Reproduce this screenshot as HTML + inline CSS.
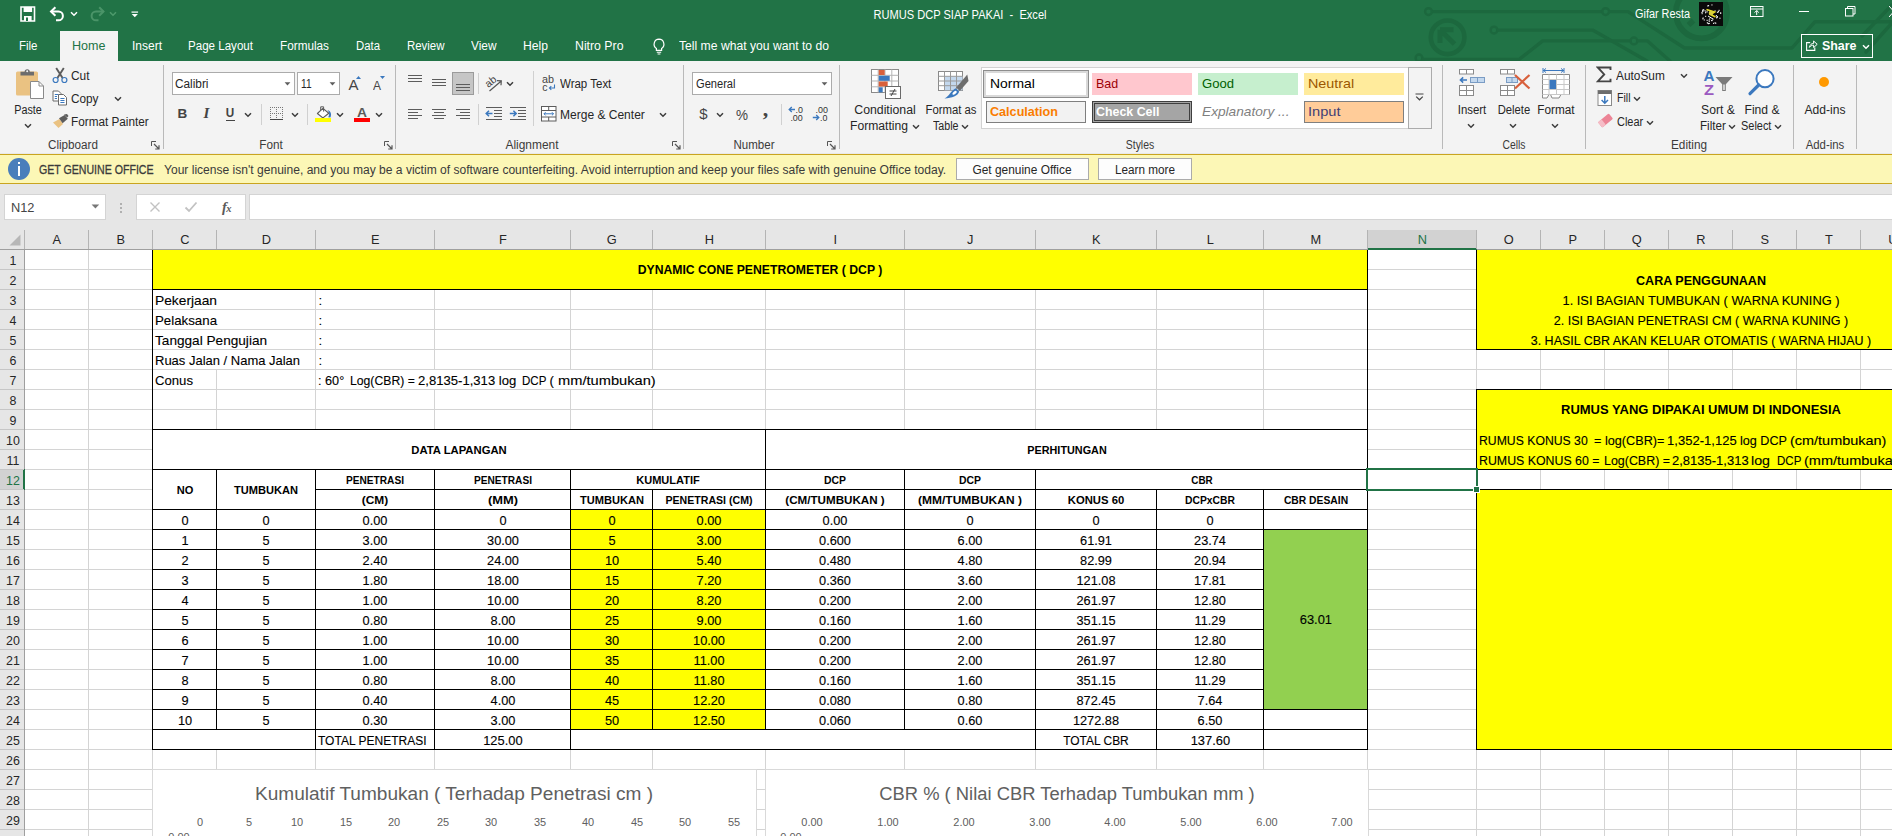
<!DOCTYPE html>
<html><head><meta charset="utf-8"><title>RUMUS DCP SIAP PAKAI - Excel</title>
<style>
html,body{margin:0;padding:0;}
body{width:1892px;height:836px;overflow:hidden;position:relative;background:#fff;font-family:"Liberation Sans",sans-serif;}
.a{position:absolute;display:block;}
.t{position:absolute;white-space:pre;display:block;}
</style></head><body>

<div class="a" style="left:0px;top:0px;width:1892px;height:61px;background:#217346;"></div>
<svg class="a" style="left:1400px;top:0px;" width="492" height="61" viewBox="0 0 492 61">
<g fill="none" stroke="#1c683e" stroke-width="3.400" stroke-linecap="round" stroke-linejoin="round">
<path d="M32.500 11.600 H201.500"/>
<circle cx="28.500" cy="11.600" r="3.400" stroke-width="2.400"/>
<circle cx="205.600" cy="11.600" r="3.400" stroke-width="2.400"/>
<path d="M209.600 11.600 H228 L284.500 48 H392 L415 21.700 H492"/>
<circle cx="47.600" cy="37.300" r="16.800" stroke-width="4.600"/>
<path d="M40 29.700 L54.500 44 M40 29.700 H53.500 M40 29.700 V43" stroke-width="5" stroke-linecap="butt" stroke-linejoin="miter"/>
<circle cx="94" cy="30.100" r="3.400" stroke-width="2.400"/>
<path d="M98 30.100 H192.600 L247 61"/>
<circle cx="19" cy="57.900" r="3.400" stroke-width="2.400"/>
<path d="M23 59.500 H119 L142.700 40.900 H230"/>
<circle cx="233.900" cy="40.900" r="3.400" stroke-width="2.400"/>
<path d="M237.800 40.900 H247.500 L270 61"/>
<circle cx="301.400" cy="12.800" r="25.600" stroke-width="5.800"/>
<path d="M288.500 25 L293.500 20.500" stroke-width="5.500" stroke-linecap="butt"/>
<path d="M492 5 L462 36 M492 23 L466 52"/>
</g></svg>
<svg class="a" style="left:20px;top:6px;" width="16" height="16" viewBox="0 0 16 16"><path d="M1 1 H14.5 V15 H1 Z" fill="none" stroke="#fff" stroke-width="1.6"/><rect x="3.6" y="1" width="8.5" height="5" fill="#fff"/><rect x="4" y="10" width="7.6" height="5" fill="#fff"/><rect x="6" y="11.5" width="2" height="3.5" fill="#217346"/></svg>
<svg class="a" style="left:49px;top:6px;" width="18" height="16" viewBox="0 0 18 16"><path d="M2 5.500 H9.500 A4.400 4.400 0 0 1 9.500 14.300 H7" fill="none" stroke="#fff" stroke-width="2"/><path d="M6.400 1.200 L2 5.500 L6.400 9.800" fill="none" stroke="#fff" stroke-width="2"/></svg>
<svg class="a" style="left:70px;top:11px;" width="8" height="6" viewBox="0 0 8 6"><path d="M1 1.2 L4 4.2 L7 1.2" fill="none" stroke="#fff" stroke-width="1.5"/></svg>
<svg class="a" style="left:88px;top:6px;" width="18" height="16" viewBox="0 0 18 16"><path d="M15.500 5.500 H8 A4.400 4.400 0 0 0 8 14.300 H10.500" fill="none" stroke="#4a9468" stroke-width="2"/><path d="M11.200 1.200 L15.500 5.500 L11.200 9.800" fill="none" stroke="#4a9468" stroke-width="2"/></svg>
<svg class="a" style="left:109px;top:11px;" width="8" height="6" viewBox="0 0 8 6"><path d="M1 1.2 L4 4.2 L7 1.2" fill="none" stroke="#4e9a6c" stroke-width="1.5"/></svg>
<svg class="a" style="left:131px;top:10.5px;" width="8" height="7" viewBox="0 0 8 7"><rect x="0.5" y="0.5" width="6.6" height="1.2" fill="#fff"/><path d="M0.7 3 H6.9 L3.8 6.2 Z" fill="#fff"/></svg>
<span class="t" style="left:959.5px;top:6.90px;font-size:12px;line-height:17px;color:#fff;transform:translateX(-50%) scaleX(0.9235);">RUMUS DCP SIAP PAKAI  -  Excel</span>
<span class="t" style="left:1634.5px;top:6.10px;font-size:12px;line-height:17px;color:#fff;transform-origin:0 50%;transform:scaleX(0.9065);">Gifar Resta</span>
<div class="a" style="left:1699px;top:2px;width:24px;height:24px;background:#0a0a0a;"></div>
<svg class="a" style="left:1699px;top:2px;" width="24" height="24" viewBox="0 0 24 24"><g fill="#f4f4f4"><rect x="7.8" y="20.2" width="1.1" height="1.1"/><rect x="4.7" y="17.4" width="1.1" height="1.1"/><rect x="17.6" y="14.5" width="1.1" height="1.1"/><rect x="17.1" y="15.3" width="1.1" height="1.1"/><rect x="17.8" y="14.0" width="1.1" height="1.1"/><rect x="14.0" y="20.8" width="1.1" height="1.1"/><rect x="3.6" y="15.5" width="1.1" height="1.1"/><rect x="12.4" y="18.0" width="1.1" height="1.1"/><rect x="3.3" y="16.3" width="1.1" height="1.1"/><rect x="3.4" y="8.0" width="1.1" height="1.1"/><rect x="7.8" y="7.3" width="1.1" height="1.1"/><rect x="17.9" y="9.8" width="1.1" height="1.1"/><rect x="4.1" y="7.1" width="1.1" height="1.1"/><rect x="21.1" y="10.4" width="1.1" height="1.1"/><rect x="3.2" y="8.5" width="1.1" height="1.1"/><rect x="9.7" y="20.9" width="1.1" height="1.1"/><rect x="6.0" y="10.2" width="1.1" height="1.1"/><rect x="8.5" y="20.9" width="1.1" height="1.1"/><rect x="8.2" y="3.4" width="1.1" height="1.1"/><rect x="7.6" y="9.3" width="1.1" height="1.1"/><rect x="15.5" y="20.3" width="1.1" height="1.1"/><rect x="3.2" y="9.1" width="1.1" height="1.1"/><rect x="6.3" y="9.4" width="1.1" height="1.1"/><rect x="13.4" y="16.6" width="1.1" height="1.1"/><rect x="2.4" y="9.9" width="1.1" height="1.1"/><rect x="9.6" y="17.5" width="1.1" height="1.1"/><rect x="19.6" y="7.8" width="1.1" height="1.1"/><rect x="9.0" y="21.1" width="1.1" height="1.1"/><rect x="16.2" y="20.7" width="1.1" height="1.1"/><rect x="12.2" y="18.0" width="1.1" height="1.1"/><rect x="9.7" y="18.8" width="1.1" height="1.1"/><rect x="15.5" y="8.3" width="1.1" height="1.1"/><rect x="6.1" y="13.8" width="1.1" height="1.1"/><rect x="21.1" y="10.7" width="1.1" height="1.1"/><rect x="2.6" y="11.1" width="1.1" height="1.1"/><rect x="12.4" y="2.4" width="1.1" height="1.1"/><rect x="18.8" y="8.8" width="1.1" height="1.1"/><rect x="16.8" y="13.0" width="1.1" height="1.1"/><rect x="17.5" y="14.7" width="1.1" height="1.1"/><rect x="3.2" y="7.5" width="1.1" height="1.1"/><rect x="10.1" y="16.4" width="1.1" height="1.1"/><rect x="7.6" y="17.8" width="1.1" height="1.1"/><rect x="5.5" y="8.2" width="1.1" height="1.1"/><rect x="20.4" y="15.7" width="1.1" height="1.1"/><rect x="19.0" y="9.3" width="1.1" height="1.1"/><rect x="9.0" y="3.1" width="1.1" height="1.1"/></g><path d="M7.500 7.500 L15.500 10 L11.500 12.500 L16.500 15" stroke="#e9dc25" stroke-width="1.700" fill="none"/><circle cx="12" cy="11" r="2.300" fill="#d8cf40"/><path d="M9 14 L14 17" stroke="#fff" stroke-width="1"/></svg>
<svg class="a" style="left:1750px;top:6px;" width="14" height="12" viewBox="0 0 14 12"><rect x="0.5" y="0.5" width="12.5" height="10" fill="none" stroke="#fff" stroke-width="1"/><path d="M0.5 3 H13" stroke="#fff" stroke-width="1"/><path d="M6.7 9 V4.6 M4.6 6.6 L6.7 4.5 L8.8 6.6" stroke="#fff" stroke-width="1" fill="none"/></svg>
<div class="a" style="left:1799px;top:11px;width:10px;height:1px;background:#fff;"></div>
<svg class="a" style="left:1845px;top:6px;" width="11" height="11" viewBox="0 0 11 11"><rect x="0.5" y="2.5" width="7.5" height="7.5" fill="none" stroke="#fff" stroke-width="1"/><path d="M2.5 2.5 V0.5 H10 V8 H8" fill="none" stroke="#fff" stroke-width="1"/></svg>
<svg class="a" style="left:1889px;top:6px;" width="4" height="11" viewBox="0 0 4 11"><path d="M0 0 L4 4.5 M0 11 L4 6.5" stroke="#fff" stroke-width="1" fill="none"/></svg>
<div class="a" style="left:60px;top:31px;width:58px;height:31px;background:#f3f3f3;"></div>
<span class="t" style="left:19px;top:36.70px;font-size:12.5px;line-height:18px;color:#fff;transform-origin:0 50%;transform:scaleX(0.9178);">File</span>
<span class="t" style="left:72px;top:36.70px;font-size:12.5px;line-height:18px;color:#217346;transform-origin:0 50%;transform:scaleX(1.0047);">Home</span>
<span class="t" style="left:131.5px;top:36.70px;font-size:12.5px;line-height:18px;color:#fff;transform-origin:0 50%;transform:scaleX(0.9600);">Insert</span>
<span class="t" style="left:188px;top:36.70px;font-size:12.5px;line-height:18px;color:#fff;transform-origin:0 50%;transform:scaleX(0.9259);">Page Layout</span>
<span class="t" style="left:280px;top:36.70px;font-size:12.5px;line-height:18px;color:#fff;transform-origin:0 50%;transform:scaleX(0.9406);">Formulas</span>
<span class="t" style="left:356px;top:36.70px;font-size:12.5px;line-height:18px;color:#fff;transform-origin:0 50%;transform:scaleX(0.9089);">Data</span>
<span class="t" style="left:407px;top:36.70px;font-size:12.5px;line-height:18px;color:#fff;transform-origin:0 50%;transform:scaleX(0.9146);">Review</span>
<span class="t" style="left:471px;top:36.70px;font-size:12.5px;line-height:18px;color:#fff;transform-origin:0 50%;transform:scaleX(0.9483);">View</span>
<span class="t" style="left:523px;top:36.70px;font-size:12.5px;line-height:18px;color:#fff;transform-origin:0 50%;transform:scaleX(0.9721);">Help</span>
<span class="t" style="left:575px;top:36.70px;font-size:12.5px;line-height:18px;color:#fff;transform-origin:0 50%;transform:scaleX(0.9835);">Nitro Pro</span>
<svg class="a" style="left:652px;top:38px;" width="14" height="17" viewBox="0 0 14 17"><path d="M7 1.2 A5 5 0 0 1 9.6 10.4 V12.4 H4.4 V10.4 A5 5 0 0 1 7 1.2 Z" fill="none" stroke="#fff" stroke-width="1.2"/><path d="M4.8 14.2 H9.2 M5.6 16 H8.4" stroke="#fff" stroke-width="1.1"/></svg>
<span class="t" style="left:679px;top:36.70px;font-size:12.5px;line-height:18px;color:#fff;transform-origin:0 50%;transform:scaleX(0.9725);">Tell me what you want to do</span>
<div class="a" style="left:1801px;top:34px;width:70px;height:22px;border:1px solid #fff;"></div>
<svg class="a" style="left:1806px;top:39px;" width="12" height="12" viewBox="0 0 12 12"><path d="M4.2 3.6 H0.6 V11.4 H8.8 V8.6" fill="none" stroke="#fff" stroke-width="1.1"/><path d="M3.4 8.4 C3.9 5.6 5.6 4.4 7.6 4.4 V2 L11.2 5.3 L7.6 8.6 V6.2 C5.8 6.2 4.4 6.9 3.4 8.4 Z" fill="none" stroke="#fff" stroke-width="1" stroke-linejoin="round"/></svg>
<span class="t" style="left:1822px;top:36.00px;font-size:13.5px;line-height:19px;color:#fff;font-weight:bold;transform-origin:0 50%;transform:scaleX(0.9192);">Share</span>
<svg class="a" style="left:1862px;top:43.5px;" width="8" height="6" viewBox="0 0 8 6"><path d="M1 1.2 L4 4.2 L7 1.2" fill="none" stroke="#fff" stroke-width="1.5"/></svg>
<div class="a" style="left:0px;top:61px;width:1892px;height:93px;background:#f3f3f3;"></div>
<svg class="a" style="left:15px;top:68px;" width="31" height="32" viewBox="0 0 31 32"><rect x="1" y="3.5" width="22" height="24" rx="1.5" fill="#eac282"/>
<path d="M5.500 3.800 H9.600 A2.600 2.600 0 0 1 14.800 3.800 H19 V7.600 H5.500 Z" fill="#6d6d6d"/><circle cx="12.200" cy="3.200" r="1" fill="#f3f3f3"/>
<path d="M15.5 13.5 H24 L28.5 18 V30.5 H15.5 Z" fill="#fff" stroke="#8a8a8a" stroke-width="1"/>
<path d="M24 13.5 V18 H28.5" fill="none" stroke="#8a8a8a" stroke-width="1"/></svg>
<span class="t" style="left:28px;top:101.50px;font-size:12px;line-height:17px;color:#262626;transform:translateX(-50%) scaleX(0.8966);">Paste</span>
<svg class="a" style="left:23.5px;top:122.5px;" width="8" height="6" viewBox="0 0 8 6"><path d="M1 1.2 L4 4.2 L7 1.2" fill="none" stroke="#3c3c3c" stroke-width="1.5"/></svg>
<svg class="a" style="left:52px;top:67px;" width="16" height="17" viewBox="0 0 16 17"><path d="M4.2 1 L10.6 11 M11.8 1 L5.4 11" stroke="#5c5c5c" stroke-width="1.9" fill="none"/>
<circle cx="3.6" cy="13" r="2.5" fill="none" stroke="#3b78be" stroke-width="1.2"/><circle cx="12.4" cy="13" r="2.5" fill="none" stroke="#3b78be" stroke-width="1.2"/></svg>
<span class="t" style="left:71.3px;top:67.50px;font-size:12px;line-height:17px;color:#262626;transform-origin:0 50%;transform:scaleX(0.9908);">Cut</span>
<svg class="a" style="left:52px;top:90px;" width="16" height="16" viewBox="0 0 16 16"><path d="M1 1 H6.5 L9 3.5 V11 H1 Z" fill="#fff" stroke="#6a6a6a" stroke-width="1"/>
<path d="M2.8 4.5 H6.5 M2.8 6.5 H5 M2.8 8.5 H5" stroke="#3b78be" stroke-width="1"/>
<path d="M6.5 4.5 H11.5 L14.5 7.5 V15 H6.5 Z" fill="#fff" stroke="#6a6a6a" stroke-width="1"/>
<path d="M8.4 8.5 H12.5 M8.4 10.5 H12.5 M8.4 12.5 H12.5" stroke="#3b78be" stroke-width="1"/></svg>
<span class="t" style="left:71.3px;top:90.50px;font-size:12px;line-height:17px;color:#262626;transform-origin:0 50%;transform:scaleX(0.9816);">Copy</span>
<svg class="a" style="left:113.5px;top:95.5px;" width="8" height="6" viewBox="0 0 8 6"><path d="M1 1.2 L4 4.2 L7 1.2" fill="none" stroke="#3c3c3c" stroke-width="1.5"/></svg>
<svg class="a" style="left:52px;top:114px;" width="17" height="15" viewBox="0 0 17 15"><path d="M1 8.5 L7.5 5 L11 10 L6.5 14 Z" fill="#eac282"/>
<path d="M7 4.2 L12.6 1 L15.8 4.8 L10.6 9.2 Z" fill="#5c5c5c"/><path d="M12 0.6 L15 0 L16.5 2 L15.2 3.4 Z" fill="#5c5c5c"/></svg>
<span class="t" style="left:71.3px;top:113.50px;font-size:12px;line-height:17px;color:#262626;transform-origin:0 50%;transform:scaleX(0.9793);">Format Painter</span>
<span class="t" style="left:72.5px;top:136.50px;font-size:12px;line-height:17px;color:#3b3b3b;transform:translateX(-50%) scaleX(0.9732);">Clipboard</span>
<svg class="a" style="left:151.0px;top:141.0px;" width="9" height="9" viewBox="0 0 9 9"><path d="M0.5 5 V0.5 H5" fill="none" stroke="#555" stroke-width="1"/><path d="M3 3 L8 8 M8 4.2 V8 H4.2" fill="none" stroke="#555" stroke-width="1.2"/></svg>
<div class="a" style="left:163px;top:65px;width:1px;height:84px;background:#b9b9b9;"></div>
<div class="a" style="left:172px;top:72px;width:121px;height:21px;border:1px solid #ababab;background:#fff;"></div>
<div class="a" style="left:297px;top:72px;width:41px;height:21px;border:1px solid #ababab;background:#fff;"></div>
<span class="t" style="left:175.3px;top:75.50px;font-size:12px;line-height:17px;color:#262626;transform-origin:0 50%;transform:scaleX(0.9844);">Calibri</span>
<span class="t" style="left:300.6px;top:75.50px;font-size:12px;line-height:17px;color:#262626;transform-origin:0 50%;transform:scaleX(0.8432);">11</span>
<svg class="a" style="left:283.8px;top:81.7px;" width="7" height="4" viewBox="0 0 7 4"><path d="M0.6 0.3 L6.4 0.3 L3.5 3.4 Z" fill="#5e5e5e"/></svg>
<svg class="a" style="left:328.8px;top:81.7px;" width="7" height="4" viewBox="0 0 7 4"><path d="M0.6 0.3 L6.4 0.3 L3.5 3.4 Z" fill="#5e5e5e"/></svg>
<span class="t" style="left:348.5px;top:74.00px;font-size:15px;line-height:21px;color:#444;transform-origin:0 50%;transform:scaleX(1.0000);">A</span>
<svg class="a" style="left:356px;top:76px;" width="5" height="3" viewBox="0 0 5 3"><path d="M0 3 L2.5 0 L5 3 Z" fill="#3b78be"/></svg>
<span class="t" style="left:372.8px;top:76.50px;font-size:12.5px;line-height:18px;color:#444;transform-origin:0 50%;transform:scaleX(0.9588);">A</span>
<svg class="a" style="left:379.6px;top:76px;" width="5" height="3" viewBox="0 0 5 3"><path d="M0 0 L5 0 L2.5 3 Z" fill="#3b78be"/></svg>
<span class="t" style="left:182.3px;top:104.00px;font-size:13.5px;line-height:19px;color:#444;font-weight:bold;transform:translateX(-50%) scaleX(1.0000);">B</span>
<span class="t" style="left:206.3px;top:104px;font-family:'Liberation Serif',serif;font-size:15px;line-height:19px;font-style:italic;font-weight:bold;color:#444;transform:translateX(-50%);">I</span>
<span class="t" style="left:230.3px;top:104.00px;font-size:13px;line-height:18px;color:#444;font-weight:bold;transform:translateX(-50%) scaleX(0.9000);">U</span>
<div class="a" style="left:226px;top:120px;width:9px;height:1px;background:#444;"></div>
<svg class="a" style="left:244.3px;top:111.5px;" width="8" height="6" viewBox="0 0 8 6"><path d="M1 1.2 L4 4.2 L7 1.2" fill="none" stroke="#3c3c3c" stroke-width="1.5"/></svg>
<div class="a" style="left:261px;top:104px;width:1px;height:21px;background:#d0d0d0;"></div>
<svg class="a" style="left:270px;top:107px;" width="14" height="14" viewBox="0 0 14 14"><g stroke="#777" stroke-width="1" stroke-dasharray="1 1" shape-rendering="crispEdges"><path d="M0 0.5 H13 M0.5 0 V12 M12.5 0 V12 M6.5 0 V12 M0 6.5 H13"/></g><path d="M0 12.5 H13" stroke="#444" stroke-width="1" shape-rendering="crispEdges"/></svg>
<svg class="a" style="left:290.5px;top:111.5px;" width="8" height="6" viewBox="0 0 8 6"><path d="M1 1.2 L4 4.2 L7 1.2" fill="none" stroke="#3c3c3c" stroke-width="1.5"/></svg>
<div class="a" style="left:307px;top:104px;width:1px;height:21px;background:#d0d0d0;"></div>
<svg class="a" style="left:315px;top:105px;" width="17" height="13" viewBox="0 0 17 13"><path d="M12.400 5 C15.600 5.800 17 9 15.400 12.600 L13.200 12.200 C14.800 9.600 14.400 7.400 12.400 5 Z" fill="#3b78be"/>
<path d="M7.900 3.400 L13.800 8.200 L7.900 12.900 L2.400 8.500 Z" fill="#fff" stroke="#5c5c5c" stroke-width="1.100" stroke-linejoin="round"/>
<path d="M5.700 5.600 V1.800 H8.600 V6.600" fill="none" stroke="#5c5c5c" stroke-width="1"/></svg>
<div class="a" style="left:315px;top:118px;width:16px;height:4px;background:#ffff00;"></div>
<svg class="a" style="left:336.4px;top:111.5px;" width="8" height="6" viewBox="0 0 8 6"><path d="M1 1.2 L4 4.2 L7 1.2" fill="none" stroke="#3c3c3c" stroke-width="1.5"/></svg>
<span class="t" style="left:362.3px;top:103.10px;font-size:13.5px;line-height:19px;color:#5a5a5a;font-weight:bold;transform:translateX(-50%) scaleX(1.0256);">A</span>
<div class="a" style="left:354px;top:118px;width:16px;height:4px;background:#ff0000;"></div>
<svg class="a" style="left:375.3px;top:111.5px;" width="8" height="6" viewBox="0 0 8 6"><path d="M1 1.2 L4 4.2 L7 1.2" fill="none" stroke="#3c3c3c" stroke-width="1.5"/></svg>
<span class="t" style="left:271px;top:136.50px;font-size:12px;line-height:17px;color:#3b3b3b;transform:translateX(-50%) scaleX(0.9792);">Font</span>
<svg class="a" style="left:383.5px;top:141.0px;" width="9" height="9" viewBox="0 0 9 9"><path d="M0.5 5 V0.5 H5" fill="none" stroke="#555" stroke-width="1"/><path d="M3 3 L8 8 M8 4.2 V8 H4.2" fill="none" stroke="#555" stroke-width="1.2"/></svg>
<div class="a" style="left:395px;top:65px;width:1px;height:84px;background:#b9b9b9;"></div>
<div class="a" style="left:408px;top:75px;width:14px;height:1px;background:#5c5c5c;"></div>
<div class="a" style="left:408px;top:78px;width:14px;height:1px;background:#5c5c5c;"></div>
<div class="a" style="left:408px;top:81px;width:14px;height:1px;background:#5c5c5c;"></div>
<div class="a" style="left:432px;top:79px;width:14px;height:1px;background:#5c5c5c;"></div>
<div class="a" style="left:432px;top:82px;width:14px;height:1px;background:#5c5c5c;"></div>
<div class="a" style="left:432px;top:85px;width:14px;height:1px;background:#5c5c5c;"></div>
<div class="a" style="left:452px;top:72px;width:20px;height:21px;border:1px solid #9b9b9b;background:#c6c6c6;"></div>
<div class="a" style="left:456px;top:84px;width:14px;height:1px;background:#5c5c5c;"></div>
<div class="a" style="left:456px;top:87px;width:14px;height:1px;background:#5c5c5c;"></div>
<div class="a" style="left:456px;top:90px;width:14px;height:1px;background:#5c5c5c;"></div>
<div class="a" style="left:478px;top:73px;width:1px;height:21px;background:#d0d0d0;"></div>
<svg class="a" style="left:485px;top:74px;" width="18" height="18" viewBox="0 0 18 18"><g transform="rotate(-38 7 9)"><text x="1" y="10.5" font-family="Liberation Sans" font-size="10.5" fill="#444">ab</text></g>
<path d="M4.5 17 L16 7.2 M12 6.6 L16.3 6.9 L16 11.2" fill="none" stroke="#555" stroke-width="1.2"/></svg>
<svg class="a" style="left:505.5px;top:80.5px;" width="8" height="6" viewBox="0 0 8 6"><path d="M1 1.2 L4 4.2 L7 1.2" fill="none" stroke="#3c3c3c" stroke-width="1.5"/></svg>
<div class="a" style="left:533px;top:71px;width:1px;height:55px;background:#d0d0d0;"></div>
<svg class="a" style="left:542px;top:75px;" width="15" height="17" viewBox="0 0 15 17"><text x="0" y="7.6" font-family="Liberation Sans" font-size="10.5" fill="#444" textLength="12" lengthAdjust="spacingAndGlyphs">ab</text><text x="0.2" y="15.6" font-family="Liberation Sans" font-size="10.5" fill="#444">c</text>
<path d="M12.5 9.5 V13 H7.5 M9.3 11.2 L7.4 13 L9.3 14.8" fill="none" stroke="#3b78be" stroke-width="1.1"/></svg>
<span class="t" style="left:560.4px;top:75.50px;font-size:12px;line-height:17px;color:#262626;transform-origin:0 50%;transform:scaleX(0.9578);">Wrap Text</span>
<div class="a" style="left:408px;top:109px;width:14px;height:1px;background:#5c5c5c;"></div>
<div class="a" style="left:408px;top:112px;width:10px;height:1px;background:#5c5c5c;"></div>
<div class="a" style="left:408px;top:115px;width:14px;height:1px;background:#5c5c5c;"></div>
<div class="a" style="left:408px;top:118px;width:10px;height:1px;background:#5c5c5c;"></div>
<div class="a" style="left:432.0px;top:109px;width:14px;height:1px;background:#5c5c5c;"></div>
<div class="a" style="left:434.0px;top:112px;width:10px;height:1px;background:#5c5c5c;"></div>
<div class="a" style="left:432.0px;top:115px;width:14px;height:1px;background:#5c5c5c;"></div>
<div class="a" style="left:434.0px;top:118px;width:10px;height:1px;background:#5c5c5c;"></div>
<div class="a" style="left:456px;top:109px;width:14px;height:1px;background:#5c5c5c;"></div>
<div class="a" style="left:460px;top:112px;width:10px;height:1px;background:#5c5c5c;"></div>
<div class="a" style="left:456px;top:115px;width:14px;height:1px;background:#5c5c5c;"></div>
<div class="a" style="left:460px;top:118px;width:10px;height:1px;background:#5c5c5c;"></div>
<div class="a" style="left:478px;top:104px;width:1px;height:21px;background:#d0d0d0;"></div>
<svg class="a" style="left:485px;top:106px;" width="18" height="15" viewBox="0 0 18 15"><path d="M1 1.5 H17 M9 4.5 H17 M9 7.5 H17 M9 10.5 H17 M1 13.5 H17" stroke="#5c5c5c" stroke-width="1" shape-rendering="crispEdges"/>
<path d="M7.5 7.5 H1.4 M4 4.8 L1.2 7.5 L4 10.2" fill="none" stroke="#3b78be" stroke-width="1.5"/></svg>
<svg class="a" style="left:509px;top:106px;" width="18" height="15" viewBox="0 0 18 15"><path d="M1 1.5 H17 M9 4.5 H17 M9 7.5 H17 M9 10.5 H17 M1 13.5 H17" stroke="#5c5c5c" stroke-width="1" shape-rendering="crispEdges"/>
<path d="M0.8 7.5 H7 M4.4 4.8 L7.2 7.5 L4.4 10.2" fill="none" stroke="#3b78be" stroke-width="1.5"/></svg>
<svg class="a" style="left:541px;top:106px;" width="16" height="16" viewBox="0 0 16 16"><rect x="0.5" y="0.5" width="14.5" height="14.5" fill="#fff" stroke="#5c5c5c" stroke-width="1"/>
<path d="M0.5 4.5 H15 M0.5 11 H15 M7.7 0.5 V4.5 M7.7 11 V15" stroke="#5c5c5c" stroke-width="1"/>
<path d="M3 7.8 H12.5 M4.6 6.2 L3 7.8 L4.6 9.4 M10.9 6.2 L12.5 7.8 L10.9 9.4" fill="none" stroke="#3b78be" stroke-width="1"/></svg>
<span class="t" style="left:560.4px;top:106.50px;font-size:12px;line-height:17px;color:#262626;transform-origin:0 50%;transform:scaleX(1.0013);">Merge &amp; Center</span>
<svg class="a" style="left:659.3px;top:111.5px;" width="8" height="6" viewBox="0 0 8 6"><path d="M1 1.2 L4 4.2 L7 1.2" fill="none" stroke="#3c3c3c" stroke-width="1.5"/></svg>
<span class="t" style="left:531.7px;top:136.50px;font-size:12px;line-height:17px;color:#3b3b3b;transform:translateX(-50%) scaleX(0.9933);">Alignment</span>
<svg class="a" style="left:671.5px;top:141.0px;" width="9" height="9" viewBox="0 0 9 9"><path d="M0.5 5 V0.5 H5" fill="none" stroke="#555" stroke-width="1"/><path d="M3 3 L8 8 M8 4.2 V8 H4.2" fill="none" stroke="#555" stroke-width="1.2"/></svg>
<div class="a" style="left:683px;top:65px;width:1px;height:84px;background:#b9b9b9;"></div>
<div class="a" style="left:692px;top:72px;width:138px;height:21px;border:1px solid #ababab;background:#fff;"></div>
<span class="t" style="left:695.5px;top:75.50px;font-size:12px;line-height:17px;color:#262626;transform-origin:0 50%;transform:scaleX(0.9253);">General</span>
<svg class="a" style="left:820.8px;top:81.7px;" width="7" height="4" viewBox="0 0 7 4"><path d="M0.6 0.3 L6.4 0.3 L3.5 3.4 Z" fill="#5e5e5e"/></svg>
<span class="t" style="left:703.5px;top:103.00px;font-size:15px;line-height:21px;color:#444;transform:translateX(-50%) scaleX(1.0000);">$</span>
<svg class="a" style="left:716.4px;top:111.5px;" width="8" height="6" viewBox="0 0 8 6"><path d="M1 1.2 L4 4.2 L7 1.2" fill="none" stroke="#3c3c3c" stroke-width="1.5"/></svg>
<span class="t" style="left:742.3px;top:103.50px;font-size:15px;line-height:21px;color:#444;transform:translateX(-50%) scaleX(0.9000);">%</span>
<span class="t" style="left:765.5px;top:97px;font-family:'Liberation Serif',serif;font-size:22px;line-height:24px;font-weight:bold;color:#444;transform:translateX(-50%);">,</span>
<div class="a" style="left:781px;top:104px;width:1px;height:21px;background:#d0d0d0;"></div>
<svg class="a" style="left:788px;top:105px;" width="17" height="17" viewBox="0 0 17 17"><path d="M7 4.500 H1.400 M3.800 2 L1.200 4.500 L3.800 7" fill="none" stroke="#3b78be" stroke-width="1.300"/>
<text x="7.6" y="7.6" font-family="Liberation Sans" font-size="9" fill="#333" textLength="7.4" lengthAdjust="spacingAndGlyphs">.0</text><text x="2.4" y="15.6" font-family="Liberation Sans" font-size="9" fill="#333" textLength="12.4" lengthAdjust="spacingAndGlyphs">.00</text></svg>
<svg class="a" style="left:812px;top:105px;" width="17" height="17" viewBox="0 0 17 17"><text x="3.6" y="7.6" font-family="Liberation Sans" font-size="9" fill="#333" textLength="12.4" lengthAdjust="spacingAndGlyphs">.00</text>
<path d="M0.800 12.500 H6.600 M4.200 10 L6.800 12.500 L4.200 15" fill="none" stroke="#3b78be" stroke-width="1.300"/><text x="8" y="15.6" font-family="Liberation Sans" font-size="9" fill="#333" textLength="7.4" lengthAdjust="spacingAndGlyphs">.0</text></svg>
<span class="t" style="left:753.7px;top:136.50px;font-size:12px;line-height:17px;color:#3b3b3b;transform:translateX(-50%) scaleX(0.9605);">Number</span>
<svg class="a" style="left:827.0px;top:141.0px;" width="9" height="9" viewBox="0 0 9 9"><path d="M0.5 5 V0.5 H5" fill="none" stroke="#555" stroke-width="1"/><path d="M3 3 L8 8 M8 4.2 V8 H4.2" fill="none" stroke="#555" stroke-width="1.2"/></svg>
<div class="a" style="left:839px;top:65px;width:1px;height:84px;background:#b9b9b9;"></div>
<svg class="a" style="left:871px;top:68px;" width="31" height="32" viewBox="0 0 31 32"><rect x="0.5" y="1.5" width="27" height="23" fill="#fff" stroke="#8a8a8a" stroke-width="1"/>
<path d="M0.5 7.3 H27.5 M0.5 13 H27.5 M0.5 18.8 H27.5 M7.2 1.5 V24.5 M14 1.5 V24.5 M20.8 1.5 V24.5" stroke="#b5b5b5" stroke-width="1"/>
<rect x="7.7" y="2" width="6" height="5" fill="#d8603c"/><rect x="7.7" y="7.8" width="11" height="5" fill="#3b78be"/><rect x="7.7" y="13.5" width="9" height="5" fill="#d8603c"/><rect x="7.7" y="19.3" width="4" height="5" fill="#3b78be"/>
<rect x="14.5" y="18.5" width="15" height="12" fill="#fff" stroke="#6a6a6a" stroke-width="1"/>
<path d="M18.5 23 H25.5 M18.5 26 H25.5 M24 21 L20 28" stroke="#444" stroke-width="1"/></svg>
<span class="t" style="left:885px;top:101.50px;font-size:12px;line-height:17px;color:#262626;transform:translateX(-50%) scaleX(1.0242);">Conditional</span>
<span class="t" style="left:850.4px;top:117.50px;font-size:12px;line-height:17px;color:#262626;transform-origin:0 50%;transform:scaleX(1.0114);">Formatting</span>
<svg class="a" style="left:911.8px;top:123.5px;" width="8" height="6" viewBox="0 0 8 6"><path d="M1 1.2 L4 4.2 L7 1.2" fill="none" stroke="#3c3c3c" stroke-width="1.5"/></svg>
<svg class="a" style="left:938px;top:70px;" width="31" height="30" viewBox="0 0 31 30"><rect x="0.5" y="1.5" width="24" height="19" fill="#fff" stroke="#8a8a8a" stroke-width="1"/>
<rect x="6.5" y="6.3" width="18" height="14" fill="#c3d8ee"/>
<path d="M0.5 6.3 H24.5 M0.5 11 H24.5 M0.5 15.7 H24.5 M6.5 1.5 V20.5 M12.5 1.5 V20.5 M18.5 1.5 V20.5" stroke="#9a9a9a" stroke-width="1"/>
<path d="M29.300 4.500 L30.500 11 L21.800 21 L18.200 17.600 Z" fill="#6d6d6d"/>
<path d="M17.600 18.200 L21.200 21.600 C20 26 14 28.200 6.500 28.500 C11.500 26 12.500 21 17.600 18.200 Z" fill="#3b78be"/><ellipse cx="16.600" cy="22.800" rx="2.600" ry="1.300" fill="#fff" transform="rotate(-40 16.600 22.800)"/></svg>
<span class="t" style="left:951px;top:101.50px;font-size:12px;line-height:17px;color:#262626;transform:translateX(-50%) scaleX(0.9444);">Format as</span>
<span class="t" style="left:933.2px;top:117.50px;font-size:12px;line-height:17px;color:#262626;transform-origin:0 50%;transform:scaleX(0.8889);">Table</span>
<svg class="a" style="left:961.4px;top:123.5px;" width="8" height="6" viewBox="0 0 8 6"><path d="M1 1.2 L4 4.2 L7 1.2" fill="none" stroke="#3c3c3c" stroke-width="1.5"/></svg>
<div class="a" style="left:981px;top:67px;width:427px;height:60px;border:1px solid #d2d2d2;background:#fff;"></div>
<div class="a" style="left:983px;top:70px;width:104px;height:26px;border:1px solid #8d8d8d;background:#d9d9d9;"></div>
<div class="a" style="left:986px;top:73px;width:100px;height:22px;background:#fff;"></div>
<span class="t" style="left:990.4px;top:74.00px;font-size:13.5px;line-height:19px;color:#000;transform-origin:0 50%;transform:scaleX(1.0291);">Normal</span>
<div class="a" style="left:1092px;top:73px;width:100px;height:22px;background:#ffc7ce;"></div>
<span class="t" style="left:1096.3px;top:74.00px;font-size:13.5px;line-height:19px;color:#9c0006;transform-origin:0 50%;transform:scaleX(0.9238);">Bad</span>
<div class="a" style="left:1198px;top:73px;width:100px;height:22px;background:#c6efce;"></div>
<span class="t" style="left:1202.4px;top:74.00px;font-size:13.5px;line-height:19px;color:#006100;transform-origin:0 50%;transform:scaleX(0.9683);">Good</span>
<div class="a" style="left:1304px;top:73px;width:100px;height:22px;background:#ffeb9c;"></div>
<span class="t" style="left:1308.1px;top:74.00px;font-size:13.5px;line-height:19px;color:#9c5700;transform-origin:0 50%;transform:scaleX(1.0632);">Neutral</span>
<div class="a" style="left:986px;top:101px;width:98px;height:20px;border:1px solid #7f7f7f;background:#f2f2f2;"></div>
<span class="t" style="left:990.4px;top:102.00px;font-size:13.5px;line-height:19px;color:#fa7d00;font-weight:bold;transform-origin:0 50%;transform:scaleX(0.9341);">Calculation</span>
<div class="a" style="left:1092px;top:101px;width:94px;height:16px;border:3px double #3f3f3f;background:#a5a5a5;"></div>
<span class="t" style="left:1096.3px;top:102.00px;font-size:13.5px;line-height:19px;color:#fff;font-weight:bold;transform-origin:0 50%;transform:scaleX(0.9180);">Check Cell</span>
<span class="t" style="left:1202.4px;top:102.00px;font-size:13.5px;line-height:19px;color:#7f7f7f;font-style:italic;transform-origin:0 50%;transform:scaleX(1.0136);">Explanatory ...</span>
<div class="a" style="left:1304px;top:101px;width:98px;height:20px;border:1px solid #7f7f7f;background:#ffcc99;"></div>
<span class="t" style="left:1308.1px;top:102.00px;font-size:13.5px;line-height:19px;color:#3f3f76;transform-origin:0 50%;transform:scaleX(1.0816);">Input</span>
<div class="a" style="left:1408px;top:67px;width:22px;height:60px;border:1px solid #ababab;background:#f3f3f3;"></div>
<svg class="a" style="left:1415px;top:93px;" width="9" height="8" viewBox="0 0 9 8"><path d="M0.5 1 H8.5" stroke="#444" stroke-width="1"/><path d="M1.2 3.6 L4.5 6.8 L7.8 3.6" fill="none" stroke="#444" stroke-width="1.2"/></svg>
<span class="t" style="left:1140.4px;top:136.50px;font-size:12px;line-height:17px;color:#3b3b3b;transform:translateX(-50%) scaleX(0.8723);">Styles</span>
<div class="a" style="left:1442px;top:65px;width:1px;height:84px;background:#b9b9b9;"></div>
<svg class="a" style="left:1459px;top:68px;" width="27" height="29" viewBox="0 0 27 29"><rect x="0.5" y="1.5" width="14" height="4.5" fill="#fff" stroke="#8a8a8a"/><path d="M7.5 1.5 V6" stroke="#8a8a8a"/>
<rect x="11.5" y="9.5" width="14" height="5" fill="#c3d8ee" stroke="#7a9cc4"/><path d="M18.5 9.5 V14.5" stroke="#7a9cc4"/>
<path d="M8 12 H1.6 M4.2 9.4 L1.4 12 L4.2 14.6" fill="none" stroke="#3b78be" stroke-width="1.5"/>
<rect x="0.5" y="17.5" width="14" height="10" fill="#fff" stroke="#8a8a8a"/><path d="M7.5 17.5 V27.5 M0.5 22.5 H14.5" stroke="#8a8a8a"/></svg>
<span class="t" style="left:1471.7px;top:101.50px;font-size:12px;line-height:17px;color:#262626;transform:translateX(-50%) scaleX(0.9500);">Insert</span>
<svg class="a" style="left:1467.4px;top:122.5px;" width="8" height="6" viewBox="0 0 8 6"><path d="M1 1.2 L4 4.2 L7 1.2" fill="none" stroke="#3c3c3c" stroke-width="1.5"/></svg>
<svg class="a" style="left:1500px;top:68px;" width="31" height="29" viewBox="0 0 31 29"><rect x="0.5" y="1.5" width="14" height="4.5" fill="#fff" stroke="#8a8a8a"/><path d="M7.5 1.5 V6" stroke="#8a8a8a"/>
<rect x="6.5" y="9.5" width="11" height="5" fill="#c3d8ee" stroke="#7a9cc4"/><path d="M12 9.5 V14.5" stroke="#7a9cc4"/>
<rect x="0.5" y="17.5" width="14" height="10" fill="#fff" stroke="#8a8a8a"/><path d="M7.5 17.5 V27.5 M0.5 22.5 H14.5" stroke="#8a8a8a"/>
<path d="M15 7 L29.500 20.500 M29.500 7 L15 20.500" stroke="#d8603c" stroke-width="2.200" fill="none"/></svg>
<span class="t" style="left:1513.7px;top:101.50px;font-size:12px;line-height:17px;color:#262626;transform:translateX(-50%) scaleX(0.9369);">Delete</span>
<svg class="a" style="left:1509.3px;top:122.5px;" width="8" height="6" viewBox="0 0 8 6"><path d="M1 1.2 L4 4.2 L7 1.2" fill="none" stroke="#3c3c3c" stroke-width="1.5"/></svg>
<svg class="a" style="left:1541px;top:67px;" width="30" height="33" viewBox="0 0 30 33"><path d="M2 3.5 H23 M2 1 V6 M23 1 V6 M5 1.4 L2.6 3.5 L5 5.6 M20 1.4 L22.4 3.5 L20 5.6" fill="none" stroke="#3b78be" stroke-width="1"/>
<path d="M1.5 7.500 H28.5 V27.5 H20 L18 31 H11 L9.500 27.5 H8 L6 31 H1.5 Z" fill="#fff" stroke="#8a8a8a" stroke-width="1"/>
<path d="M1.5 12.5 H28.5 M1.5 22.500 H28.5 M8 7.500 V27.5 M15.5 7.500 V27.5 M23 7.500 V27.5 M1.5 17.5 H8 M15.5 17.5 H28.5 M1.5 27.500 H28.500" stroke="#c8c8c8" stroke-width="1" fill="none"/>
<rect x="8.500" y="13" width="6.500" height="9" fill="#3b78be"/></svg>
<span class="t" style="left:1556.2px;top:101.50px;font-size:12px;line-height:17px;color:#262626;transform:translateX(-50%) scaleX(0.9816);">Format</span>
<svg class="a" style="left:1551.3px;top:122.5px;" width="8" height="6" viewBox="0 0 8 6"><path d="M1 1.2 L4 4.2 L7 1.2" fill="none" stroke="#3c3c3c" stroke-width="1.5"/></svg>
<span class="t" style="left:1514px;top:136.50px;font-size:12px;line-height:17px;color:#3b3b3b;transform:translateX(-50%) scaleX(0.8618);">Cells</span>
<div class="a" style="left:1585px;top:65px;width:1px;height:84px;background:#b9b9b9;"></div>
<svg class="a" style="left:1596px;top:66px;" width="17" height="17" viewBox="0 0 17 17"><path d="M14.5 4 V1.500 H1.800 L8.200 8.400 L1.800 15.400 H14.500 V12.800" fill="none" stroke="#444" stroke-width="1.900"/></svg>
<span class="t" style="left:1616.3px;top:67.50px;font-size:12px;line-height:17px;color:#262626;transform-origin:0 50%;transform:scaleX(0.9890);">AutoSum</span>
<svg class="a" style="left:1680.2px;top:72.5px;" width="8" height="6" viewBox="0 0 8 6"><path d="M1 1.2 L4 4.2 L7 1.2" fill="none" stroke="#3c3c3c" stroke-width="1.5"/></svg>
<svg class="a" style="left:1597px;top:90px;" width="16" height="16" viewBox="0 0 16 16"><rect x="1" y="0.5" width="13.5" height="15" fill="#fff" stroke="#8a8a8a" stroke-width="1"/><rect x="1" y="0.5" width="13.5" height="3.5" fill="#6d6d6d"/>
<path d="M7.8 6 V13 M4.600 10 L7.800 13.200 L11 10" fill="none" stroke="#3b78be" stroke-width="1.500"/></svg>
<span class="t" style="left:1616.8px;top:90.00px;font-size:12px;line-height:17px;color:#262626;transform-origin:0 50%;transform:scaleX(0.8798);">Fill</span>
<svg class="a" style="left:1633.4px;top:96px;" width="8" height="6" viewBox="0 0 8 6"><path d="M1 1.2 L4 4.2 L7 1.2" fill="none" stroke="#3c3c3c" stroke-width="1.5"/></svg>
<svg class="a" style="left:1597.5px;top:113px;" width="15" height="15" viewBox="0 0 15 15"><g transform="rotate(-40 7.500 7.500)"><rect x="0.500" y="4" width="14" height="7" rx="1.300" fill="#ec8496"/><rect x="0.500" y="4" width="4.600" height="7" rx="1.300" fill="#f5bcc6"/></g></svg>
<span class="t" style="left:1616.8px;top:113.50px;font-size:12px;line-height:17px;color:#262626;transform-origin:0 50%;transform:scaleX(0.9133);">Clear</span>
<svg class="a" style="left:1645.6px;top:119.5px;" width="8" height="6" viewBox="0 0 8 6"><path d="M1 1.2 L4 4.2 L7 1.2" fill="none" stroke="#3c3c3c" stroke-width="1.5"/></svg>
<span class="t" style="left:1708.6px;top:66.00px;font-size:14.5px;line-height:20px;color:#3b78be;font-weight:bold;transform:translateX(-50%) scaleX(1.0507);">A</span>
<span class="t" style="left:1708.6px;top:80.30px;font-size:14.5px;line-height:20px;color:#9b59c0;font-weight:bold;transform:translateX(-50%) scaleX(1.1287);">Z</span>
<svg class="a" style="left:1715px;top:76px;" width="18" height="16" viewBox="0 0 18 16"><path d="M0.500 1 H17.500 L10.800 8.200 V15 H7.200 V8.200 Z" fill="#7a7a7a"/><path d="M8.300 8.500 V14 H9.700 V8.500 Z" fill="#f3f3f3"/></svg>
<span class="t" style="left:1718px;top:101.50px;font-size:12px;line-height:17px;color:#262626;transform:translateX(-50%) scaleX(1.0142);">Sort &amp;</span>
<span class="t" style="left:1699.6px;top:117.50px;font-size:12px;line-height:17px;color:#262626;transform-origin:0 50%;transform:scaleX(0.9673);">Filter</span>
<svg class="a" style="left:1727.7px;top:123.5px;" width="8" height="6" viewBox="0 0 8 6"><path d="M1 1.2 L4 4.2 L7 1.2" fill="none" stroke="#3c3c3c" stroke-width="1.5"/></svg>
<svg class="a" style="left:1747px;top:67px;" width="30" height="30" viewBox="0 0 30 30"><circle cx="18" cy="11.700" r="8.600" fill="#fff" stroke="#3b78be" stroke-width="2"/><path d="M11.700 18 L3 26.700" stroke="#3b78be" stroke-width="3.200" stroke-linecap="round"/></svg>
<span class="t" style="left:1762px;top:101.50px;font-size:12px;line-height:17px;color:#262626;transform:translateX(-50%) scaleX(1.0095);">Find &amp;</span>
<span class="t" style="left:1741.4px;top:117.50px;font-size:12px;line-height:17px;color:#262626;transform-origin:0 50%;transform:scaleX(0.9117);">Select</span>
<svg class="a" style="left:1774.4px;top:123.5px;" width="8" height="6" viewBox="0 0 8 6"><path d="M1 1.2 L4 4.2 L7 1.2" fill="none" stroke="#3c3c3c" stroke-width="1.5"/></svg>
<span class="t" style="left:1689.4px;top:136.50px;font-size:12px;line-height:17px;color:#3b3b3b;transform:translateX(-50%) scaleX(0.9813);">Editing</span>
<div class="a" style="left:1793px;top:65px;width:1px;height:84px;background:#b9b9b9;"></div>
<div class="a" style="left:1818.8px;top:77px;width:10px;height:10px;border-radius:5px;background:#ff9900;"></div>
<span class="t" style="left:1825px;top:101.50px;font-size:12px;line-height:17px;color:#262626;transform:translateX(-50%) scaleX(1.0077);">Add-ins</span>
<span class="t" style="left:1824.7px;top:136.50px;font-size:12px;line-height:17px;color:#3b3b3b;transform:translateX(-50%) scaleX(0.9487);">Add-ins</span>
<div class="a" style="left:1856px;top:65px;width:1px;height:84px;background:#b9b9b9;"></div>
<div class="a" style="left:0px;top:153px;width:1892px;height:1px;background:#e9e9e9;"></div>
<div class="a" style="left:0px;top:154px;width:1892px;height:30px;background:#fcf7b6;"></div>
<div class="a" style="left:0px;top:154px;width:1892px;height:1px;background:#c9a420;"></div>
<div class="a" style="left:0px;top:183px;width:1892px;height:1px;background:#c9a420;"></div>
<div class="a" style="left:8px;top:158px;width:22px;height:22px;border-radius:11px;background:#4a7ebb;"></div>
<div class="a" style="left:17.8px;top:161.6px;width:2.5px;height:2.6px;background:#fff;"></div>
<div class="a" style="left:17.8px;top:166px;width:2.5px;height:10px;background:#fff;"></div>
<span class="t" style="left:39.3px;top:162.10px;font-size:12px;line-height:17px;color:#3a3a3a;transform-origin:0 50%;transform:scaleX(0.8825);-webkit-text-stroke:0.3px #3a3a3a;">GET GENUINE OFFICE</span>
<span class="t" style="left:164.1px;top:162.10px;font-size:12px;line-height:17px;color:#3a3a3a;transform-origin:0 50%;transform:scaleX(1.0050);">Your license isn&#x27;t genuine, and you may be a victim of software counterfeiting. Avoid interruption and keep your files safe with genuine Office today.</span>
<div class="a" style="left:956px;top:158px;width:131px;height:20px;border:1px solid #ababab;background:#fdfdfd;"></div>
<span class="t" style="left:1021.5px;top:162.10px;font-size:12px;line-height:17px;color:#262626;transform:translateX(-50%) scaleX(0.9920);">Get genuine Office</span>
<div class="a" style="left:1098px;top:158px;width:92px;height:20px;border:1px solid #ababab;background:#fdfdfd;"></div>
<span class="t" style="left:1144.5px;top:162.10px;font-size:12px;line-height:17px;color:#262626;transform:translateX(-50%) scaleX(0.9778);">Learn more</span>
<div class="a" style="left:0px;top:184px;width:1892px;height:46px;background:#e6e6e6;"></div>
<div class="a" style="left:4px;top:194px;width:100px;height:24px;border:1px solid #d4d4d4;background:#fff;"></div>
<span class="t" style="left:11.4px;top:199.20px;font-size:12.5px;line-height:18px;color:#444;transform-origin:0 50%;transform:scaleX(1.0245);">N12</span>
<svg class="a" style="left:91px;top:204px;" width="9" height="5" viewBox="0 0 9 5"><path d="M0.6 0.4 L8.2 0.4 L4.4 4.4 Z" fill="#777"/></svg>
<div class="a" style="left:120px;top:203px;width:2px;height:2px;background:#b0b0b0;"></div>
<div class="a" style="left:120px;top:207px;width:2px;height:2px;background:#b0b0b0;"></div>
<div class="a" style="left:120px;top:211px;width:2px;height:2px;background:#b0b0b0;"></div>
<div class="a" style="left:136px;top:194px;width:108px;height:24px;border:1px solid #d4d4d4;background:#fff;"></div>
<svg class="a" style="left:149px;top:201px;" width="12" height="12" viewBox="0 0 12 12"><path d="M1.500 1.500 L10.500 10.500 M10.500 1.500 L1.500 10.500" stroke="#c2c2c2" stroke-width="1.400" fill="none"/></svg>
<svg class="a" style="left:184px;top:201px;" width="14" height="12" viewBox="0 0 14 12"><path d="M1.500 6.500 L5 10 L12.500 1.500" stroke="#c2c2c2" stroke-width="1.800" fill="none"/></svg>
<span class="t" style="left:222px;top:197.5px;font-family:'Liberation Serif',serif;font-size:14.5px;line-height:18px;font-style:italic;font-weight:bold;color:#5a5a5a;letter-spacing:-0.5px;">f<span style="font-size:10.5px;">x</span></span>
<div class="a" style="left:249px;top:194px;width:1650px;height:24px;border:1px solid #d4d4d4;background:#fff;"></div>
<div class="a" style="left:0px;top:230px;width:1892px;height:606px;background:#fff;"></div>
<div class="a" style="left:0px;top:230px;width:1892px;height:20px;background:#e6e6e6;"></div>
<div class="a" style="left:0px;top:249px;width:1892px;height:1px;background:#9f9f9f;"></div>
<div class="a" style="left:1368px;top:230px;width:108px;height:18px;background:#d2d2d2;"></div>
<div class="a" style="left:1368px;top:248px;width:109px;height:2px;background:#217346;"></div>
<div class="a" style="left:88px;top:230px;width:1px;height:19px;background:#b4b4b4;"></div>
<span class="t" style="left:56.8px;top:231.00px;font-size:12.8px;line-height:18px;color:#262626;transform:translateX(-50%) scaleX(1.0000);">A</span>
<div class="a" style="left:152px;top:230px;width:1px;height:19px;background:#b4b4b4;"></div>
<span class="t" style="left:120.8px;top:231.00px;font-size:12.8px;line-height:18px;color:#262626;transform:translateX(-50%) scaleX(1.0000);">B</span>
<div class="a" style="left:216px;top:230px;width:1px;height:19px;background:#b4b4b4;"></div>
<span class="t" style="left:184.8px;top:231.00px;font-size:12.8px;line-height:18px;color:#262626;transform:translateX(-50%) scaleX(1.0000);">C</span>
<div class="a" style="left:315px;top:230px;width:1px;height:19px;background:#b4b4b4;"></div>
<span class="t" style="left:266.3px;top:231.00px;font-size:12.8px;line-height:18px;color:#262626;transform:translateX(-50%) scaleX(1.0000);">D</span>
<div class="a" style="left:434px;top:230px;width:1px;height:19px;background:#b4b4b4;"></div>
<span class="t" style="left:375.3px;top:231.00px;font-size:12.8px;line-height:18px;color:#262626;transform:translateX(-50%) scaleX(1.0000);">E</span>
<div class="a" style="left:570px;top:230px;width:1px;height:19px;background:#b4b4b4;"></div>
<span class="t" style="left:502.8px;top:231.00px;font-size:12.8px;line-height:18px;color:#262626;transform:translateX(-50%) scaleX(1.0000);">F</span>
<div class="a" style="left:652px;top:230px;width:1px;height:19px;background:#b4b4b4;"></div>
<span class="t" style="left:611.8px;top:231.00px;font-size:12.8px;line-height:18px;color:#262626;transform:translateX(-50%) scaleX(1.0000);">G</span>
<div class="a" style="left:765px;top:230px;width:1px;height:19px;background:#b4b4b4;"></div>
<span class="t" style="left:709.3px;top:231.00px;font-size:12.8px;line-height:18px;color:#262626;transform:translateX(-50%) scaleX(1.0000);">H</span>
<div class="a" style="left:904px;top:230px;width:1px;height:19px;background:#b4b4b4;"></div>
<span class="t" style="left:835.3px;top:231.00px;font-size:12.8px;line-height:18px;color:#262626;transform:translateX(-50%) scaleX(1.0000);">I</span>
<div class="a" style="left:1035px;top:230px;width:1px;height:19px;background:#b4b4b4;"></div>
<span class="t" style="left:970.3px;top:231.00px;font-size:12.8px;line-height:18px;color:#262626;transform:translateX(-50%) scaleX(1.0000);">J</span>
<div class="a" style="left:1156px;top:230px;width:1px;height:19px;background:#b4b4b4;"></div>
<span class="t" style="left:1096.3px;top:231.00px;font-size:12.8px;line-height:18px;color:#262626;transform:translateX(-50%) scaleX(1.0000);">K</span>
<div class="a" style="left:1263px;top:230px;width:1px;height:19px;background:#b4b4b4;"></div>
<span class="t" style="left:1210.3px;top:231.00px;font-size:12.8px;line-height:18px;color:#262626;transform:translateX(-50%) scaleX(1.0000);">L</span>
<div class="a" style="left:1367px;top:230px;width:1px;height:19px;background:#b4b4b4;"></div>
<span class="t" style="left:1315.8px;top:231.00px;font-size:12.8px;line-height:18px;color:#262626;transform:translateX(-50%) scaleX(1.0000);">M</span>
<div class="a" style="left:1476px;top:230px;width:1px;height:19px;background:#b4b4b4;"></div>
<span class="t" style="left:1422.3px;top:231.00px;font-size:12.8px;line-height:18px;color:#217346;transform:translateX(-50%) scaleX(1.0000);">N</span>
<div class="a" style="left:1540px;top:230px;width:1px;height:19px;background:#b4b4b4;"></div>
<span class="t" style="left:1508.8px;top:231.00px;font-size:12.8px;line-height:18px;color:#262626;transform:translateX(-50%) scaleX(1.0000);">O</span>
<div class="a" style="left:1604px;top:230px;width:1px;height:19px;background:#b4b4b4;"></div>
<span class="t" style="left:1572.8px;top:231.00px;font-size:12.8px;line-height:18px;color:#262626;transform:translateX(-50%) scaleX(1.0000);">P</span>
<div class="a" style="left:1668px;top:230px;width:1px;height:19px;background:#b4b4b4;"></div>
<span class="t" style="left:1636.8px;top:231.00px;font-size:12.8px;line-height:18px;color:#262626;transform:translateX(-50%) scaleX(1.0000);">Q</span>
<div class="a" style="left:1732px;top:230px;width:1px;height:19px;background:#b4b4b4;"></div>
<span class="t" style="left:1700.8px;top:231.00px;font-size:12.8px;line-height:18px;color:#262626;transform:translateX(-50%) scaleX(1.0000);">R</span>
<div class="a" style="left:1796px;top:230px;width:1px;height:19px;background:#b4b4b4;"></div>
<span class="t" style="left:1764.8px;top:231.00px;font-size:12.8px;line-height:18px;color:#262626;transform:translateX(-50%) scaleX(1.0000);">S</span>
<div class="a" style="left:1860px;top:230px;width:1px;height:19px;background:#b4b4b4;"></div>
<span class="t" style="left:1828.8px;top:231.00px;font-size:12.8px;line-height:18px;color:#262626;transform:translateX(-50%) scaleX(1.0000);">T</span>
<div class="a" style="left:1924px;top:230px;width:1px;height:19px;background:#b4b4b4;"></div>
<span class="t" style="left:1892.8px;top:231.00px;font-size:12.8px;line-height:18px;color:#262626;transform:translateX(-50%) scaleX(1.0000);">U</span>
<div class="a" style="left:24px;top:230px;width:1px;height:19px;background:#b4b4b4;"></div>
<svg class="a" style="left:9px;top:234px;" width="12" height="12" viewBox="0 0 12 12"><path d="M11.500 0.500 V11.500 H0.500 Z" fill="#b7b7b7"/></svg>
<div class="a" style="left:0px;top:250px;width:24px;height:586px;background:#e6e6e6;"></div>
<div class="a" style="left:24px;top:250px;width:1px;height:586px;background:#9f9f9f;"></div>
<div class="a" style="left:0px;top:470px;width:24px;height:19px;background:#d2d2d2;"></div>
<div class="a" style="left:23px;top:469px;width:2px;height:21px;background:#217346;"></div>
<div class="a" style="left:0px;top:269px;width:24px;height:1px;background:#c6c6c6;"></div>
<span class="t" style="left:12.7px;top:251.80px;font-size:12.8px;line-height:18px;color:#262626;transform:translateX(-50%) scaleX(0.9700);">1</span>
<div class="a" style="left:0px;top:289px;width:24px;height:1px;background:#c6c6c6;"></div>
<span class="t" style="left:12.7px;top:271.80px;font-size:12.8px;line-height:18px;color:#262626;transform:translateX(-50%) scaleX(0.9700);">2</span>
<div class="a" style="left:0px;top:309px;width:24px;height:1px;background:#c6c6c6;"></div>
<span class="t" style="left:12.7px;top:291.80px;font-size:12.8px;line-height:18px;color:#262626;transform:translateX(-50%) scaleX(0.9700);">3</span>
<div class="a" style="left:0px;top:329px;width:24px;height:1px;background:#c6c6c6;"></div>
<span class="t" style="left:12.7px;top:311.80px;font-size:12.8px;line-height:18px;color:#262626;transform:translateX(-50%) scaleX(0.9700);">4</span>
<div class="a" style="left:0px;top:349px;width:24px;height:1px;background:#c6c6c6;"></div>
<span class="t" style="left:12.7px;top:331.80px;font-size:12.8px;line-height:18px;color:#262626;transform:translateX(-50%) scaleX(0.9700);">5</span>
<div class="a" style="left:0px;top:369px;width:24px;height:1px;background:#c6c6c6;"></div>
<span class="t" style="left:12.7px;top:351.80px;font-size:12.8px;line-height:18px;color:#262626;transform:translateX(-50%) scaleX(0.9700);">6</span>
<div class="a" style="left:0px;top:389px;width:24px;height:1px;background:#c6c6c6;"></div>
<span class="t" style="left:12.7px;top:371.80px;font-size:12.8px;line-height:18px;color:#262626;transform:translateX(-50%) scaleX(0.9700);">7</span>
<div class="a" style="left:0px;top:409px;width:24px;height:1px;background:#c6c6c6;"></div>
<span class="t" style="left:12.7px;top:391.80px;font-size:12.8px;line-height:18px;color:#262626;transform:translateX(-50%) scaleX(0.9700);">8</span>
<div class="a" style="left:0px;top:429px;width:24px;height:1px;background:#c6c6c6;"></div>
<span class="t" style="left:12.7px;top:411.80px;font-size:12.8px;line-height:18px;color:#262626;transform:translateX(-50%) scaleX(0.9700);">9</span>
<div class="a" style="left:0px;top:449px;width:24px;height:1px;background:#c6c6c6;"></div>
<span class="t" style="left:12.7px;top:431.80px;font-size:12.8px;line-height:18px;color:#262626;transform:translateX(-50%) scaleX(0.9700);">10</span>
<div class="a" style="left:0px;top:469px;width:24px;height:1px;background:#c6c6c6;"></div>
<span class="t" style="left:12.7px;top:451.80px;font-size:12.8px;line-height:18px;color:#262626;transform:translateX(-50%) scaleX(0.9700);">11</span>
<div class="a" style="left:0px;top:489px;width:24px;height:1px;background:#c6c6c6;"></div>
<span class="t" style="left:12.7px;top:471.80px;font-size:12.8px;line-height:18px;color:#217346;transform:translateX(-50%) scaleX(0.9700);">12</span>
<div class="a" style="left:0px;top:509px;width:24px;height:1px;background:#c6c6c6;"></div>
<span class="t" style="left:12.7px;top:491.80px;font-size:12.8px;line-height:18px;color:#262626;transform:translateX(-50%) scaleX(0.9700);">13</span>
<div class="a" style="left:0px;top:529px;width:24px;height:1px;background:#c6c6c6;"></div>
<span class="t" style="left:12.7px;top:511.80px;font-size:12.8px;line-height:18px;color:#262626;transform:translateX(-50%) scaleX(0.9700);">14</span>
<div class="a" style="left:0px;top:549px;width:24px;height:1px;background:#c6c6c6;"></div>
<span class="t" style="left:12.7px;top:531.80px;font-size:12.8px;line-height:18px;color:#262626;transform:translateX(-50%) scaleX(0.9700);">15</span>
<div class="a" style="left:0px;top:569px;width:24px;height:1px;background:#c6c6c6;"></div>
<span class="t" style="left:12.7px;top:551.80px;font-size:12.8px;line-height:18px;color:#262626;transform:translateX(-50%) scaleX(0.9700);">16</span>
<div class="a" style="left:0px;top:589px;width:24px;height:1px;background:#c6c6c6;"></div>
<span class="t" style="left:12.7px;top:571.80px;font-size:12.8px;line-height:18px;color:#262626;transform:translateX(-50%) scaleX(0.9700);">17</span>
<div class="a" style="left:0px;top:609px;width:24px;height:1px;background:#c6c6c6;"></div>
<span class="t" style="left:12.7px;top:591.80px;font-size:12.8px;line-height:18px;color:#262626;transform:translateX(-50%) scaleX(0.9700);">18</span>
<div class="a" style="left:0px;top:629px;width:24px;height:1px;background:#c6c6c6;"></div>
<span class="t" style="left:12.7px;top:611.80px;font-size:12.8px;line-height:18px;color:#262626;transform:translateX(-50%) scaleX(0.9700);">19</span>
<div class="a" style="left:0px;top:649px;width:24px;height:1px;background:#c6c6c6;"></div>
<span class="t" style="left:12.7px;top:631.80px;font-size:12.8px;line-height:18px;color:#262626;transform:translateX(-50%) scaleX(0.9700);">20</span>
<div class="a" style="left:0px;top:669px;width:24px;height:1px;background:#c6c6c6;"></div>
<span class="t" style="left:12.7px;top:651.80px;font-size:12.8px;line-height:18px;color:#262626;transform:translateX(-50%) scaleX(0.9700);">21</span>
<div class="a" style="left:0px;top:689px;width:24px;height:1px;background:#c6c6c6;"></div>
<span class="t" style="left:12.7px;top:671.80px;font-size:12.8px;line-height:18px;color:#262626;transform:translateX(-50%) scaleX(0.9700);">22</span>
<div class="a" style="left:0px;top:709px;width:24px;height:1px;background:#c6c6c6;"></div>
<span class="t" style="left:12.7px;top:691.80px;font-size:12.8px;line-height:18px;color:#262626;transform:translateX(-50%) scaleX(0.9700);">23</span>
<div class="a" style="left:0px;top:729px;width:24px;height:1px;background:#c6c6c6;"></div>
<span class="t" style="left:12.7px;top:711.80px;font-size:12.8px;line-height:18px;color:#262626;transform:translateX(-50%) scaleX(0.9700);">24</span>
<div class="a" style="left:0px;top:749px;width:24px;height:1px;background:#c6c6c6;"></div>
<span class="t" style="left:12.7px;top:731.80px;font-size:12.8px;line-height:18px;color:#262626;transform:translateX(-50%) scaleX(0.9700);">25</span>
<div class="a" style="left:0px;top:769px;width:24px;height:1px;background:#c6c6c6;"></div>
<span class="t" style="left:12.7px;top:751.80px;font-size:12.8px;line-height:18px;color:#262626;transform:translateX(-50%) scaleX(0.9700);">26</span>
<div class="a" style="left:0px;top:789px;width:24px;height:1px;background:#c6c6c6;"></div>
<span class="t" style="left:12.7px;top:771.80px;font-size:12.8px;line-height:18px;color:#262626;transform:translateX(-50%) scaleX(0.9700);">27</span>
<div class="a" style="left:0px;top:809px;width:24px;height:1px;background:#c6c6c6;"></div>
<span class="t" style="left:12.7px;top:791.80px;font-size:12.8px;line-height:18px;color:#262626;transform:translateX(-50%) scaleX(0.9700);">28</span>
<div class="a" style="left:0px;top:829px;width:24px;height:1px;background:#c6c6c6;"></div>
<span class="t" style="left:12.7px;top:811.80px;font-size:12.8px;line-height:18px;color:#262626;transform:translateX(-50%) scaleX(0.9700);">29</span>
<div class="a" style="left:0px;top:849px;width:24px;height:1px;background:#c6c6c6;"></div>
<div class="a" style="left:25px;top:269px;width:1867px;height:1px;background:#d4d4d4;"></div>
<div class="a" style="left:25px;top:289px;width:1867px;height:1px;background:#d4d4d4;"></div>
<div class="a" style="left:25px;top:309px;width:1867px;height:1px;background:#d4d4d4;"></div>
<div class="a" style="left:25px;top:329px;width:1867px;height:1px;background:#d4d4d4;"></div>
<div class="a" style="left:25px;top:349px;width:1867px;height:1px;background:#d4d4d4;"></div>
<div class="a" style="left:25px;top:369px;width:1867px;height:1px;background:#d4d4d4;"></div>
<div class="a" style="left:25px;top:389px;width:1867px;height:1px;background:#d4d4d4;"></div>
<div class="a" style="left:25px;top:409px;width:1867px;height:1px;background:#d4d4d4;"></div>
<div class="a" style="left:25px;top:429px;width:1867px;height:1px;background:#d4d4d4;"></div>
<div class="a" style="left:25px;top:449px;width:1867px;height:1px;background:#d4d4d4;"></div>
<div class="a" style="left:25px;top:469px;width:1867px;height:1px;background:#d4d4d4;"></div>
<div class="a" style="left:25px;top:489px;width:1867px;height:1px;background:#d4d4d4;"></div>
<div class="a" style="left:25px;top:509px;width:1867px;height:1px;background:#d4d4d4;"></div>
<div class="a" style="left:25px;top:529px;width:1867px;height:1px;background:#d4d4d4;"></div>
<div class="a" style="left:25px;top:549px;width:1867px;height:1px;background:#d4d4d4;"></div>
<div class="a" style="left:25px;top:569px;width:1867px;height:1px;background:#d4d4d4;"></div>
<div class="a" style="left:25px;top:589px;width:1867px;height:1px;background:#d4d4d4;"></div>
<div class="a" style="left:25px;top:609px;width:1867px;height:1px;background:#d4d4d4;"></div>
<div class="a" style="left:25px;top:629px;width:1867px;height:1px;background:#d4d4d4;"></div>
<div class="a" style="left:25px;top:649px;width:1867px;height:1px;background:#d4d4d4;"></div>
<div class="a" style="left:25px;top:669px;width:1867px;height:1px;background:#d4d4d4;"></div>
<div class="a" style="left:25px;top:689px;width:1867px;height:1px;background:#d4d4d4;"></div>
<div class="a" style="left:25px;top:709px;width:1867px;height:1px;background:#d4d4d4;"></div>
<div class="a" style="left:25px;top:729px;width:1867px;height:1px;background:#d4d4d4;"></div>
<div class="a" style="left:25px;top:749px;width:1867px;height:1px;background:#d4d4d4;"></div>
<div class="a" style="left:25px;top:769px;width:1867px;height:1px;background:#d4d4d4;"></div>
<div class="a" style="left:25px;top:789px;width:1867px;height:1px;background:#d4d4d4;"></div>
<div class="a" style="left:25px;top:809px;width:1867px;height:1px;background:#d4d4d4;"></div>
<div class="a" style="left:25px;top:829px;width:1867px;height:1px;background:#d4d4d4;"></div>
<div class="a" style="left:25px;top:849px;width:1867px;height:1px;background:#d4d4d4;"></div>
<div class="a" style="left:88px;top:250px;width:1px;height:586px;background:#d4d4d4;"></div>
<div class="a" style="left:152px;top:250px;width:1px;height:586px;background:#d4d4d4;"></div>
<div class="a" style="left:216px;top:250px;width:1px;height:586px;background:#d4d4d4;"></div>
<div class="a" style="left:315px;top:250px;width:1px;height:586px;background:#d4d4d4;"></div>
<div class="a" style="left:434px;top:250px;width:1px;height:586px;background:#d4d4d4;"></div>
<div class="a" style="left:570px;top:250px;width:1px;height:586px;background:#d4d4d4;"></div>
<div class="a" style="left:652px;top:250px;width:1px;height:586px;background:#d4d4d4;"></div>
<div class="a" style="left:765px;top:250px;width:1px;height:586px;background:#d4d4d4;"></div>
<div class="a" style="left:904px;top:250px;width:1px;height:586px;background:#d4d4d4;"></div>
<div class="a" style="left:1035px;top:250px;width:1px;height:586px;background:#d4d4d4;"></div>
<div class="a" style="left:1156px;top:250px;width:1px;height:586px;background:#d4d4d4;"></div>
<div class="a" style="left:1263px;top:250px;width:1px;height:586px;background:#d4d4d4;"></div>
<div class="a" style="left:1367px;top:250px;width:1px;height:586px;background:#d4d4d4;"></div>
<div class="a" style="left:1476px;top:250px;width:1px;height:586px;background:#d4d4d4;"></div>
<div class="a" style="left:1540px;top:250px;width:1px;height:586px;background:#d4d4d4;"></div>
<div class="a" style="left:1604px;top:250px;width:1px;height:586px;background:#d4d4d4;"></div>
<div class="a" style="left:1668px;top:250px;width:1px;height:586px;background:#d4d4d4;"></div>
<div class="a" style="left:1732px;top:250px;width:1px;height:586px;background:#d4d4d4;"></div>
<div class="a" style="left:1796px;top:250px;width:1px;height:586px;background:#d4d4d4;"></div>
<div class="a" style="left:1860px;top:250px;width:1px;height:586px;background:#d4d4d4;"></div>
<div class="a" style="left:1924px;top:250px;width:1px;height:586px;background:#d4d4d4;"></div>
<div class="a" style="left:216px;top:290px;width:1px;height:19px;background:#fff;"></div>
<div class="a" style="left:216px;top:310px;width:1px;height:19px;background:#fff;"></div>
<div class="a" style="left:216px;top:330px;width:1px;height:19px;background:#fff;"></div>
<div class="a" style="left:216px;top:350px;width:1px;height:19px;background:#fff;"></div>
<div class="a" style="left:434px;top:370px;width:1px;height:19px;background:#fff;"></div>
<div class="a" style="left:570px;top:370px;width:1px;height:19px;background:#fff;"></div>
<div class="a" style="left:652px;top:370px;width:1px;height:19px;background:#fff;"></div>
<div class="a" style="left:153px;top:250px;width:1214px;height:39px;background:#ffff00;"></div>
<div class="a" style="left:153px;top:430px;width:1214px;height:39px;background:#fff;"></div>
<div class="a" style="left:153px;top:470px;width:1214px;height:279px;background:#fff;"></div>
<div class="a" style="left:571px;top:510px;width:194px;height:219px;background:#ffff00;"></div>
<div class="a" style="left:1264px;top:530px;width:103px;height:179px;background:#92d050;"></div>
<div class="a" style="left:152px;top:250px;width:1px;height:500px;background:#000;"></div>
<div class="a" style="left:1367px;top:250px;width:1px;height:500px;background:#000;"></div>
<div class="a" style="left:152px;top:289px;width:1216px;height:1px;background:#000;"></div>
<div class="a" style="left:152px;top:429px;width:1216px;height:1px;background:#000;"></div>
<div class="a" style="left:765px;top:430px;width:1px;height:40px;background:#000;"></div>
<div class="a" style="left:152px;top:469px;width:1216px;height:1px;background:#000;"></div>
<div class="a" style="left:315px;top:489px;width:721px;height:1px;background:#000;"></div>
<div class="a" style="left:1035px;top:489px;width:333px;height:1px;background:#000;"></div>
<div class="a" style="left:152px;top:509px;width:1216px;height:1px;background:#000;"></div>
<div class="a" style="left:216px;top:470px;width:1px;height:40px;background:#000;"></div>
<div class="a" style="left:315px;top:470px;width:1px;height:40px;background:#000;"></div>
<div class="a" style="left:434px;top:470px;width:1px;height:40px;background:#000;"></div>
<div class="a" style="left:570px;top:470px;width:1px;height:40px;background:#000;"></div>
<div class="a" style="left:765px;top:470px;width:1px;height:40px;background:#000;"></div>
<div class="a" style="left:904px;top:470px;width:1px;height:40px;background:#000;"></div>
<div class="a" style="left:1035px;top:470px;width:1px;height:40px;background:#000;"></div>
<div class="a" style="left:652px;top:490px;width:1px;height:20px;background:#000;"></div>
<div class="a" style="left:1156px;top:490px;width:1px;height:20px;background:#000;"></div>
<div class="a" style="left:1263px;top:490px;width:1px;height:20px;background:#000;"></div>
<div class="a" style="left:152px;top:529px;width:1216px;height:1px;background:#000;"></div>
<div class="a" style="left:152px;top:549px;width:1112px;height:1px;background:#000;"></div>
<div class="a" style="left:152px;top:569px;width:1112px;height:1px;background:#000;"></div>
<div class="a" style="left:152px;top:589px;width:1112px;height:1px;background:#000;"></div>
<div class="a" style="left:152px;top:609px;width:1112px;height:1px;background:#000;"></div>
<div class="a" style="left:152px;top:629px;width:1112px;height:1px;background:#000;"></div>
<div class="a" style="left:152px;top:649px;width:1112px;height:1px;background:#000;"></div>
<div class="a" style="left:152px;top:669px;width:1112px;height:1px;background:#000;"></div>
<div class="a" style="left:152px;top:689px;width:1112px;height:1px;background:#000;"></div>
<div class="a" style="left:152px;top:709px;width:1216px;height:1px;background:#000;"></div>
<div class="a" style="left:152px;top:729px;width:1216px;height:1px;background:#000;"></div>
<div class="a" style="left:216px;top:510px;width:1px;height:220px;background:#000;"></div>
<div class="a" style="left:315px;top:510px;width:1px;height:220px;background:#000;"></div>
<div class="a" style="left:434px;top:510px;width:1px;height:220px;background:#000;"></div>
<div class="a" style="left:570px;top:510px;width:1px;height:220px;background:#000;"></div>
<div class="a" style="left:652px;top:510px;width:1px;height:220px;background:#000;"></div>
<div class="a" style="left:765px;top:510px;width:1px;height:220px;background:#000;"></div>
<div class="a" style="left:904px;top:510px;width:1px;height:220px;background:#000;"></div>
<div class="a" style="left:1035px;top:510px;width:1px;height:220px;background:#000;"></div>
<div class="a" style="left:1156px;top:510px;width:1px;height:220px;background:#000;"></div>
<div class="a" style="left:1263px;top:510px;width:1px;height:220px;background:#000;"></div>
<div class="a" style="left:152px;top:749px;width:1216px;height:1px;background:#000;"></div>
<div class="a" style="left:315px;top:730px;width:1px;height:20px;background:#000;"></div>
<div class="a" style="left:434px;top:730px;width:1px;height:20px;background:#000;"></div>
<div class="a" style="left:570px;top:730px;width:1px;height:20px;background:#000;"></div>
<div class="a" style="left:1035px;top:730px;width:1px;height:20px;background:#000;"></div>
<div class="a" style="left:1156px;top:730px;width:1px;height:20px;background:#000;"></div>
<div class="a" style="left:1263px;top:730px;width:1px;height:20px;background:#000;"></div>
<div class="a" style="left:1477px;top:250px;width:447px;height:99px;background:#ffff00;"></div>
<div class="a" style="left:1477px;top:390px;width:447px;height:79px;background:#ffff00;"></div>
<div class="a" style="left:1477px;top:490px;width:447px;height:259px;background:#ffff00;"></div>
<div class="a" style="left:1476px;top:250px;width:1px;height:100px;background:#000;"></div>
<div class="a" style="left:1476px;top:349px;width:417px;height:1px;background:#000;"></div>
<div class="a" style="left:1476px;top:389px;width:417px;height:1px;background:#000;"></div>
<div class="a" style="left:1476px;top:389px;width:1px;height:361px;background:#000;"></div>
<div class="a" style="left:1476px;top:469px;width:417px;height:1px;background:#000;"></div>
<div class="a" style="left:1476px;top:489px;width:417px;height:1px;background:#000;"></div>
<div class="a" style="left:1476px;top:749px;width:417px;height:1px;background:#000;"></div>
<div class="a" style="left:1366px;top:468px;width:108px;height:19px;border:2px solid #217346;"></div>
<div class="a" style="left:1473px;top:486px;width:7px;height:7px;background:#fff;"></div>
<div class="a" style="left:1474px;top:487px;width:5px;height:5px;background:#217346;"></div>
<div class="a" style="left:152px;top:769px;width:603px;height:80px;border:1px solid #d9d9d9;background:#fff;"></div>
<div class="a" style="left:765px;top:769px;width:602px;height:80px;border:1px solid #d9d9d9;background:#fff;"></div>
<span class="t" style="left:454.3px;top:781.90px;font-size:17.5px;line-height:24px;color:#606060;transform:translateX(-50%) scaleX(1.0892);">Kumulatif Tumbukan ( Terhadap Penetrasi cm )</span>
<span class="t" style="left:1066.5px;top:782.10px;font-size:17.5px;line-height:24px;color:#606060;transform:translateX(-50%) scaleX(1.0501);">CBR % ( Nilai CBR Terhadap Tumbukan mm )</span>
<span class="t" style="left:200.4px;top:814.20px;font-size:11.2px;line-height:16px;color:#606060;transform:translateX(-50%) scaleX(0.9800);">0</span>
<span class="t" style="left:248.9px;top:814.20px;font-size:11.2px;line-height:16px;color:#606060;transform:translateX(-50%) scaleX(0.9800);">5</span>
<span class="t" style="left:297.4px;top:814.20px;font-size:11.2px;line-height:16px;color:#606060;transform:translateX(-50%) scaleX(0.9800);">10</span>
<span class="t" style="left:345.9px;top:814.20px;font-size:11.2px;line-height:16px;color:#606060;transform:translateX(-50%) scaleX(0.9800);">15</span>
<span class="t" style="left:394.4px;top:814.20px;font-size:11.2px;line-height:16px;color:#606060;transform:translateX(-50%) scaleX(0.9800);">20</span>
<span class="t" style="left:442.9px;top:814.20px;font-size:11.2px;line-height:16px;color:#606060;transform:translateX(-50%) scaleX(0.9800);">25</span>
<span class="t" style="left:491.4px;top:814.20px;font-size:11.2px;line-height:16px;color:#606060;transform:translateX(-50%) scaleX(0.9800);">30</span>
<span class="t" style="left:539.9px;top:814.20px;font-size:11.2px;line-height:16px;color:#606060;transform:translateX(-50%) scaleX(0.9800);">35</span>
<span class="t" style="left:588.4px;top:814.20px;font-size:11.2px;line-height:16px;color:#606060;transform:translateX(-50%) scaleX(0.9800);">40</span>
<span class="t" style="left:636.9px;top:814.20px;font-size:11.2px;line-height:16px;color:#606060;transform:translateX(-50%) scaleX(0.9800);">45</span>
<span class="t" style="left:685.4px;top:814.20px;font-size:11.2px;line-height:16px;color:#606060;transform:translateX(-50%) scaleX(0.9800);">50</span>
<span class="t" style="left:733.9px;top:814.20px;font-size:11.2px;line-height:16px;color:#606060;transform:translateX(-50%) scaleX(0.9800);">55</span>
<span class="t" style="left:812.4px;top:814.20px;font-size:11.2px;line-height:16px;color:#606060;transform:translateX(-50%) scaleX(0.9800);">0.00</span>
<span class="t" style="left:888.12px;top:814.20px;font-size:11.2px;line-height:16px;color:#606060;transform:translateX(-50%) scaleX(0.9800);">1.00</span>
<span class="t" style="left:963.8399999999999px;top:814.20px;font-size:11.2px;line-height:16px;color:#606060;transform:translateX(-50%) scaleX(0.9800);">2.00</span>
<span class="t" style="left:1039.56px;top:814.20px;font-size:11.2px;line-height:16px;color:#606060;transform:translateX(-50%) scaleX(0.9800);">3.00</span>
<span class="t" style="left:1115.28px;top:814.20px;font-size:11.2px;line-height:16px;color:#606060;transform:translateX(-50%) scaleX(0.9800);">4.00</span>
<span class="t" style="left:1191.0px;top:814.20px;font-size:11.2px;line-height:16px;color:#606060;transform:translateX(-50%) scaleX(0.9800);">5.00</span>
<span class="t" style="left:1266.72px;top:814.20px;font-size:11.2px;line-height:16px;color:#606060;transform:translateX(-50%) scaleX(0.9800);">6.00</span>
<span class="t" style="left:1342.44px;top:814.20px;font-size:11.2px;line-height:16px;color:#606060;transform:translateX(-50%) scaleX(0.9800);">7.00</span>
<span class="t" style="left:178.8px;top:828.60px;font-size:11.2px;line-height:16px;color:#606060;transform:translateX(-50%) scaleX(0.9800);">0.00</span>
<span class="t" style="left:790.5px;top:828.90px;font-size:11.2px;line-height:16px;color:#606060;transform:translateX(-50%) scaleX(0.9800);">0.00</span>
<span class="t" style="left:760.4px;top:261.00px;font-size:13.2px;line-height:18px;color:#000;font-weight:bold;transform:translateX(-50%) scaleX(0.9255);">DYNAMIC CONE PENETROMETER ( DCP )</span>
<span class="t" style="left:155.4px;top:291.80px;font-size:13.2px;line-height:18px;color:#000;transform-origin:0 50%;transform:scaleX(1.0445);-webkit-text-stroke:0.12px #000;">Pekerjaan</span>
<span class="t" style="left:155.4px;top:311.80px;font-size:13.2px;line-height:18px;color:#000;transform-origin:0 50%;transform:scaleX(1.0071);-webkit-text-stroke:0.12px #000;">Pelaksana</span>
<span class="t" style="left:155.4px;top:331.80px;font-size:13.2px;line-height:18px;color:#000;transform-origin:0 50%;transform:scaleX(1.0326);-webkit-text-stroke:0.12px #000;">Tanggal Pengujian</span>
<span class="t" style="left:155.4px;top:351.80px;font-size:13.2px;line-height:18px;color:#000;transform-origin:0 50%;transform:scaleX(0.9846);-webkit-text-stroke:0.12px #000;">Ruas Jalan / Nama Jalan</span>
<span class="t" style="left:155.4px;top:371.80px;font-size:13.2px;line-height:18px;color:#000;transform-origin:0 50%;transform:scaleX(0.9971);-webkit-text-stroke:0.12px #000;">Conus</span>
<span class="t" style="left:318.4px;top:291.80px;font-size:13.2px;line-height:18px;color:#000;transform-origin:0 50%;transform:scaleX(1.0000);-webkit-text-stroke:0.12px #000;">:</span>
<span class="t" style="left:318.4px;top:311.80px;font-size:13.2px;line-height:18px;color:#000;transform-origin:0 50%;transform:scaleX(1.0000);-webkit-text-stroke:0.12px #000;">:</span>
<span class="t" style="left:318.4px;top:331.80px;font-size:13.2px;line-height:18px;color:#000;transform-origin:0 50%;transform:scaleX(1.0000);-webkit-text-stroke:0.12px #000;">:</span>
<span class="t" style="left:318.4px;top:351.80px;font-size:13.2px;line-height:18px;color:#000;transform-origin:0 50%;transform:scaleX(1.0000);-webkit-text-stroke:0.12px #000;">:</span>
<span class="t" style="left:318.4px;top:371.80px;font-size:13.2px;line-height:18px;color:#000;transform-origin:0 50%;transform:scaleX(0.9615);-webkit-text-stroke:0.12px #000;">: 60°</span>
<span class="t" style="left:350.2px;top:371.80px;font-size:13.2px;line-height:18px;color:#000;transform-origin:0 50%;transform:scaleX(0.9259);-webkit-text-stroke:0.12px #000;">Log(CBR) =</span>
<span class="t" style="left:418px;top:371.80px;font-size:13.2px;line-height:18px;color:#000;transform-origin:0 50%;transform:scaleX(0.9929);-webkit-text-stroke:0.12px #000;">2,8135-1,313 log</span>
<span class="t" style="left:522.4px;top:371.80px;font-size:13.2px;line-height:18px;color:#000;transform-origin:0 50%;transform:scaleX(0.8758);-webkit-text-stroke:0.12px #000;">DCP</span>
<span class="t" style="left:549.6px;top:371.80px;font-size:13.2px;line-height:18px;color:#000;transform-origin:0 50%;transform:scaleX(1.0000);-webkit-text-stroke:0.12px #000;">(</span>
<span class="t" style="left:557.6px;top:371.80px;font-size:13.2px;line-height:18px;color:#000;transform-origin:0 50%;transform:scaleX(1.1105);-webkit-text-stroke:0.12px #000;">mm/tumbukan)</span>
<span class="t" style="left:459.0px;top:442.50px;font-size:10.9px;line-height:15px;color:#000;font-weight:bold;transform:translateX(-50%) scaleX(1.0368);">DATA LAPANGAN</span>
<span class="t" style="left:1066.5px;top:442.50px;font-size:10.9px;line-height:15px;color:#000;font-weight:bold;transform:translateX(-50%) scaleX(0.9944);">PERHITUNGAN</span>
<span class="t" style="left:184.5px;top:482.60px;font-size:10.9px;line-height:15px;color:#000;font-weight:bold;transform:translateX(-50%) scaleX(1.0167);">NO</span>
<span class="t" style="left:266.0px;top:482.60px;font-size:10.9px;line-height:15px;color:#000;font-weight:bold;transform:translateX(-50%) scaleX(1.0176);">TUMBUKAN</span>
<span class="t" style="left:375.0px;top:472.60px;font-size:10.9px;line-height:15px;color:#000;font-weight:bold;transform:translateX(-50%) scaleX(0.9306);">PENETRASI</span>
<span class="t" style="left:375.0px;top:492.60px;font-size:10.9px;line-height:15px;color:#000;font-weight:bold;transform:translateX(-50%) scaleX(1.0956);">(CM)</span>
<span class="t" style="left:502.5px;top:472.60px;font-size:10.9px;line-height:15px;color:#000;font-weight:bold;transform:translateX(-50%) scaleX(0.9306);">PENETRASI</span>
<span class="t" style="left:502.5px;top:492.60px;font-size:10.9px;line-height:15px;color:#000;font-weight:bold;transform:translateX(-50%) scaleX(1.1808);">(MM)</span>
<span class="t" style="left:668.0px;top:472.60px;font-size:10.9px;line-height:15px;color:#000;font-weight:bold;transform:translateX(-50%) scaleX(1.0143);">KUMULATIF</span>
<span class="t" style="left:611.5px;top:492.60px;font-size:10.9px;line-height:15px;color:#000;font-weight:bold;transform:translateX(-50%) scaleX(1.0176);">TUMBUKAN</span>
<span class="t" style="left:709.0px;top:492.60px;font-size:10.9px;line-height:15px;color:#000;font-weight:bold;transform:translateX(-50%) scaleX(0.9716);">PENETRASI (CM)</span>
<span class="t" style="left:835.0px;top:472.60px;font-size:10.9px;line-height:15px;color:#000;font-weight:bold;transform:translateX(-50%) scaleX(0.9572);">DCP</span>
<span class="t" style="left:835.0px;top:492.60px;font-size:10.9px;line-height:15px;color:#000;font-weight:bold;transform:translateX(-50%) scaleX(1.0672);">(CM/TUMBUKAN )</span>
<span class="t" style="left:970.0px;top:472.60px;font-size:10.9px;line-height:15px;color:#000;font-weight:bold;transform:translateX(-50%) scaleX(0.9572);">DCP</span>
<span class="t" style="left:970.0px;top:492.60px;font-size:10.9px;line-height:15px;color:#000;font-weight:bold;transform:translateX(-50%) scaleX(1.1000);">(MM/TUMBUKAN )</span>
<span class="t" style="left:1201.5px;top:472.60px;font-size:10.9px;line-height:15px;color:#000;font-weight:bold;transform:translateX(-50%) scaleX(0.9076);">CBR</span>
<span class="t" style="left:1096.0px;top:492.60px;font-size:10.9px;line-height:15px;color:#000;font-weight:bold;transform:translateX(-50%) scaleX(1.0373);">KONUS 60</span>
<span class="t" style="left:1210.0px;top:492.60px;font-size:10.9px;line-height:15px;color:#000;font-weight:bold;transform:translateX(-50%) scaleX(0.9463);">DCPxCBR</span>
<span class="t" style="left:1315.5px;top:492.60px;font-size:10.9px;line-height:15px;color:#000;font-weight:bold;transform:translateX(-50%) scaleX(0.9476);">CBR DESAIN</span>
<span class="t" style="left:184.9px;top:511.80px;font-size:12.9px;line-height:18px;color:#000;transform:translateX(-50%) scaleX(0.9900);-webkit-text-stroke:0.12px #000;">0</span>
<span class="t" style="left:266.4px;top:511.80px;font-size:12.9px;line-height:18px;color:#000;transform:translateX(-50%) scaleX(0.9900);-webkit-text-stroke:0.12px #000;">0</span>
<span class="t" style="left:375.4px;top:511.80px;font-size:12.9px;line-height:18px;color:#000;transform:translateX(-50%) scaleX(0.9900);-webkit-text-stroke:0.12px #000;">0.00</span>
<span class="t" style="left:502.9px;top:511.80px;font-size:12.9px;line-height:18px;color:#000;transform:translateX(-50%) scaleX(0.9900);-webkit-text-stroke:0.12px #000;">0</span>
<span class="t" style="left:611.9px;top:511.80px;font-size:12.9px;line-height:18px;color:#000;transform:translateX(-50%) scaleX(0.9900);-webkit-text-stroke:0.12px #000;">0</span>
<span class="t" style="left:709.4px;top:511.80px;font-size:12.9px;line-height:18px;color:#000;transform:translateX(-50%) scaleX(0.9900);-webkit-text-stroke:0.12px #000;">0.00</span>
<span class="t" style="left:835.4px;top:511.80px;font-size:12.9px;line-height:18px;color:#000;transform:translateX(-50%) scaleX(0.9900);-webkit-text-stroke:0.12px #000;">0.00</span>
<span class="t" style="left:970.4px;top:511.80px;font-size:12.9px;line-height:18px;color:#000;transform:translateX(-50%) scaleX(0.9900);-webkit-text-stroke:0.12px #000;">0</span>
<span class="t" style="left:1096.4px;top:511.80px;font-size:12.9px;line-height:18px;color:#000;transform:translateX(-50%) scaleX(0.9900);-webkit-text-stroke:0.12px #000;">0</span>
<span class="t" style="left:1210.4px;top:511.80px;font-size:12.9px;line-height:18px;color:#000;transform:translateX(-50%) scaleX(0.9900);-webkit-text-stroke:0.12px #000;">0</span>
<span class="t" style="left:184.9px;top:531.80px;font-size:12.9px;line-height:18px;color:#000;transform:translateX(-50%) scaleX(0.9900);-webkit-text-stroke:0.12px #000;">1</span>
<span class="t" style="left:266.4px;top:531.80px;font-size:12.9px;line-height:18px;color:#000;transform:translateX(-50%) scaleX(0.9900);-webkit-text-stroke:0.12px #000;">5</span>
<span class="t" style="left:375.4px;top:531.80px;font-size:12.9px;line-height:18px;color:#000;transform:translateX(-50%) scaleX(0.9900);-webkit-text-stroke:0.12px #000;">3.00</span>
<span class="t" style="left:502.9px;top:531.80px;font-size:12.9px;line-height:18px;color:#000;transform:translateX(-50%) scaleX(0.9900);-webkit-text-stroke:0.12px #000;">30.00</span>
<span class="t" style="left:611.9px;top:531.80px;font-size:12.9px;line-height:18px;color:#000;transform:translateX(-50%) scaleX(0.9900);-webkit-text-stroke:0.12px #000;">5</span>
<span class="t" style="left:709.4px;top:531.80px;font-size:12.9px;line-height:18px;color:#000;transform:translateX(-50%) scaleX(0.9900);-webkit-text-stroke:0.12px #000;">3.00</span>
<span class="t" style="left:835.4px;top:531.80px;font-size:12.9px;line-height:18px;color:#000;transform:translateX(-50%) scaleX(0.9900);-webkit-text-stroke:0.12px #000;">0.600</span>
<span class="t" style="left:970.4px;top:531.80px;font-size:12.9px;line-height:18px;color:#000;transform:translateX(-50%) scaleX(0.9900);-webkit-text-stroke:0.12px #000;">6.00</span>
<span class="t" style="left:1096.4px;top:531.80px;font-size:12.9px;line-height:18px;color:#000;transform:translateX(-50%) scaleX(0.9900);-webkit-text-stroke:0.12px #000;">61.91</span>
<span class="t" style="left:1210.4px;top:531.80px;font-size:12.9px;line-height:18px;color:#000;transform:translateX(-50%) scaleX(0.9900);-webkit-text-stroke:0.12px #000;">23.74</span>
<span class="t" style="left:184.9px;top:551.80px;font-size:12.9px;line-height:18px;color:#000;transform:translateX(-50%) scaleX(0.9900);-webkit-text-stroke:0.12px #000;">2</span>
<span class="t" style="left:266.4px;top:551.80px;font-size:12.9px;line-height:18px;color:#000;transform:translateX(-50%) scaleX(0.9900);-webkit-text-stroke:0.12px #000;">5</span>
<span class="t" style="left:375.4px;top:551.80px;font-size:12.9px;line-height:18px;color:#000;transform:translateX(-50%) scaleX(0.9900);-webkit-text-stroke:0.12px #000;">2.40</span>
<span class="t" style="left:502.9px;top:551.80px;font-size:12.9px;line-height:18px;color:#000;transform:translateX(-50%) scaleX(0.9900);-webkit-text-stroke:0.12px #000;">24.00</span>
<span class="t" style="left:611.9px;top:551.80px;font-size:12.9px;line-height:18px;color:#000;transform:translateX(-50%) scaleX(0.9900);-webkit-text-stroke:0.12px #000;">10</span>
<span class="t" style="left:709.4px;top:551.80px;font-size:12.9px;line-height:18px;color:#000;transform:translateX(-50%) scaleX(0.9900);-webkit-text-stroke:0.12px #000;">5.40</span>
<span class="t" style="left:835.4px;top:551.80px;font-size:12.9px;line-height:18px;color:#000;transform:translateX(-50%) scaleX(0.9900);-webkit-text-stroke:0.12px #000;">0.480</span>
<span class="t" style="left:970.4px;top:551.80px;font-size:12.9px;line-height:18px;color:#000;transform:translateX(-50%) scaleX(0.9900);-webkit-text-stroke:0.12px #000;">4.80</span>
<span class="t" style="left:1096.4px;top:551.80px;font-size:12.9px;line-height:18px;color:#000;transform:translateX(-50%) scaleX(0.9900);-webkit-text-stroke:0.12px #000;">82.99</span>
<span class="t" style="left:1210.4px;top:551.80px;font-size:12.9px;line-height:18px;color:#000;transform:translateX(-50%) scaleX(0.9900);-webkit-text-stroke:0.12px #000;">20.94</span>
<span class="t" style="left:184.9px;top:571.80px;font-size:12.9px;line-height:18px;color:#000;transform:translateX(-50%) scaleX(0.9900);-webkit-text-stroke:0.12px #000;">3</span>
<span class="t" style="left:266.4px;top:571.80px;font-size:12.9px;line-height:18px;color:#000;transform:translateX(-50%) scaleX(0.9900);-webkit-text-stroke:0.12px #000;">5</span>
<span class="t" style="left:375.4px;top:571.80px;font-size:12.9px;line-height:18px;color:#000;transform:translateX(-50%) scaleX(0.9900);-webkit-text-stroke:0.12px #000;">1.80</span>
<span class="t" style="left:502.9px;top:571.80px;font-size:12.9px;line-height:18px;color:#000;transform:translateX(-50%) scaleX(0.9900);-webkit-text-stroke:0.12px #000;">18.00</span>
<span class="t" style="left:611.9px;top:571.80px;font-size:12.9px;line-height:18px;color:#000;transform:translateX(-50%) scaleX(0.9900);-webkit-text-stroke:0.12px #000;">15</span>
<span class="t" style="left:709.4px;top:571.80px;font-size:12.9px;line-height:18px;color:#000;transform:translateX(-50%) scaleX(0.9900);-webkit-text-stroke:0.12px #000;">7.20</span>
<span class="t" style="left:835.4px;top:571.80px;font-size:12.9px;line-height:18px;color:#000;transform:translateX(-50%) scaleX(0.9900);-webkit-text-stroke:0.12px #000;">0.360</span>
<span class="t" style="left:970.4px;top:571.80px;font-size:12.9px;line-height:18px;color:#000;transform:translateX(-50%) scaleX(0.9900);-webkit-text-stroke:0.12px #000;">3.60</span>
<span class="t" style="left:1096.4px;top:571.80px;font-size:12.9px;line-height:18px;color:#000;transform:translateX(-50%) scaleX(0.9900);-webkit-text-stroke:0.12px #000;">121.08</span>
<span class="t" style="left:1210.4px;top:571.80px;font-size:12.9px;line-height:18px;color:#000;transform:translateX(-50%) scaleX(0.9900);-webkit-text-stroke:0.12px #000;">17.81</span>
<span class="t" style="left:184.9px;top:591.80px;font-size:12.9px;line-height:18px;color:#000;transform:translateX(-50%) scaleX(0.9900);-webkit-text-stroke:0.12px #000;">4</span>
<span class="t" style="left:266.4px;top:591.80px;font-size:12.9px;line-height:18px;color:#000;transform:translateX(-50%) scaleX(0.9900);-webkit-text-stroke:0.12px #000;">5</span>
<span class="t" style="left:375.4px;top:591.80px;font-size:12.9px;line-height:18px;color:#000;transform:translateX(-50%) scaleX(0.9900);-webkit-text-stroke:0.12px #000;">1.00</span>
<span class="t" style="left:502.9px;top:591.80px;font-size:12.9px;line-height:18px;color:#000;transform:translateX(-50%) scaleX(0.9900);-webkit-text-stroke:0.12px #000;">10.00</span>
<span class="t" style="left:611.9px;top:591.80px;font-size:12.9px;line-height:18px;color:#000;transform:translateX(-50%) scaleX(0.9900);-webkit-text-stroke:0.12px #000;">20</span>
<span class="t" style="left:709.4px;top:591.80px;font-size:12.9px;line-height:18px;color:#000;transform:translateX(-50%) scaleX(0.9900);-webkit-text-stroke:0.12px #000;">8.20</span>
<span class="t" style="left:835.4px;top:591.80px;font-size:12.9px;line-height:18px;color:#000;transform:translateX(-50%) scaleX(0.9900);-webkit-text-stroke:0.12px #000;">0.200</span>
<span class="t" style="left:970.4px;top:591.80px;font-size:12.9px;line-height:18px;color:#000;transform:translateX(-50%) scaleX(0.9900);-webkit-text-stroke:0.12px #000;">2.00</span>
<span class="t" style="left:1096.4px;top:591.80px;font-size:12.9px;line-height:18px;color:#000;transform:translateX(-50%) scaleX(0.9900);-webkit-text-stroke:0.12px #000;">261.97</span>
<span class="t" style="left:1210.4px;top:591.80px;font-size:12.9px;line-height:18px;color:#000;transform:translateX(-50%) scaleX(0.9900);-webkit-text-stroke:0.12px #000;">12.80</span>
<span class="t" style="left:184.9px;top:611.80px;font-size:12.9px;line-height:18px;color:#000;transform:translateX(-50%) scaleX(0.9900);-webkit-text-stroke:0.12px #000;">5</span>
<span class="t" style="left:266.4px;top:611.80px;font-size:12.9px;line-height:18px;color:#000;transform:translateX(-50%) scaleX(0.9900);-webkit-text-stroke:0.12px #000;">5</span>
<span class="t" style="left:375.4px;top:611.80px;font-size:12.9px;line-height:18px;color:#000;transform:translateX(-50%) scaleX(0.9900);-webkit-text-stroke:0.12px #000;">0.80</span>
<span class="t" style="left:502.9px;top:611.80px;font-size:12.9px;line-height:18px;color:#000;transform:translateX(-50%) scaleX(0.9900);-webkit-text-stroke:0.12px #000;">8.00</span>
<span class="t" style="left:611.9px;top:611.80px;font-size:12.9px;line-height:18px;color:#000;transform:translateX(-50%) scaleX(0.9900);-webkit-text-stroke:0.12px #000;">25</span>
<span class="t" style="left:709.4px;top:611.80px;font-size:12.9px;line-height:18px;color:#000;transform:translateX(-50%) scaleX(0.9900);-webkit-text-stroke:0.12px #000;">9.00</span>
<span class="t" style="left:835.4px;top:611.80px;font-size:12.9px;line-height:18px;color:#000;transform:translateX(-50%) scaleX(0.9900);-webkit-text-stroke:0.12px #000;">0.160</span>
<span class="t" style="left:970.4px;top:611.80px;font-size:12.9px;line-height:18px;color:#000;transform:translateX(-50%) scaleX(0.9900);-webkit-text-stroke:0.12px #000;">1.60</span>
<span class="t" style="left:1096.4px;top:611.80px;font-size:12.9px;line-height:18px;color:#000;transform:translateX(-50%) scaleX(0.9900);-webkit-text-stroke:0.12px #000;">351.15</span>
<span class="t" style="left:1210.4px;top:611.80px;font-size:12.9px;line-height:18px;color:#000;transform:translateX(-50%) scaleX(0.9900);-webkit-text-stroke:0.12px #000;">11.29</span>
<span class="t" style="left:184.9px;top:631.80px;font-size:12.9px;line-height:18px;color:#000;transform:translateX(-50%) scaleX(0.9900);-webkit-text-stroke:0.12px #000;">6</span>
<span class="t" style="left:266.4px;top:631.80px;font-size:12.9px;line-height:18px;color:#000;transform:translateX(-50%) scaleX(0.9900);-webkit-text-stroke:0.12px #000;">5</span>
<span class="t" style="left:375.4px;top:631.80px;font-size:12.9px;line-height:18px;color:#000;transform:translateX(-50%) scaleX(0.9900);-webkit-text-stroke:0.12px #000;">1.00</span>
<span class="t" style="left:502.9px;top:631.80px;font-size:12.9px;line-height:18px;color:#000;transform:translateX(-50%) scaleX(0.9900);-webkit-text-stroke:0.12px #000;">10.00</span>
<span class="t" style="left:611.9px;top:631.80px;font-size:12.9px;line-height:18px;color:#000;transform:translateX(-50%) scaleX(0.9900);-webkit-text-stroke:0.12px #000;">30</span>
<span class="t" style="left:709.4px;top:631.80px;font-size:12.9px;line-height:18px;color:#000;transform:translateX(-50%) scaleX(0.9900);-webkit-text-stroke:0.12px #000;">10.00</span>
<span class="t" style="left:835.4px;top:631.80px;font-size:12.9px;line-height:18px;color:#000;transform:translateX(-50%) scaleX(0.9900);-webkit-text-stroke:0.12px #000;">0.200</span>
<span class="t" style="left:970.4px;top:631.80px;font-size:12.9px;line-height:18px;color:#000;transform:translateX(-50%) scaleX(0.9900);-webkit-text-stroke:0.12px #000;">2.00</span>
<span class="t" style="left:1096.4px;top:631.80px;font-size:12.9px;line-height:18px;color:#000;transform:translateX(-50%) scaleX(0.9900);-webkit-text-stroke:0.12px #000;">261.97</span>
<span class="t" style="left:1210.4px;top:631.80px;font-size:12.9px;line-height:18px;color:#000;transform:translateX(-50%) scaleX(0.9900);-webkit-text-stroke:0.12px #000;">12.80</span>
<span class="t" style="left:184.9px;top:651.80px;font-size:12.9px;line-height:18px;color:#000;transform:translateX(-50%) scaleX(0.9900);-webkit-text-stroke:0.12px #000;">7</span>
<span class="t" style="left:266.4px;top:651.80px;font-size:12.9px;line-height:18px;color:#000;transform:translateX(-50%) scaleX(0.9900);-webkit-text-stroke:0.12px #000;">5</span>
<span class="t" style="left:375.4px;top:651.80px;font-size:12.9px;line-height:18px;color:#000;transform:translateX(-50%) scaleX(0.9900);-webkit-text-stroke:0.12px #000;">1.00</span>
<span class="t" style="left:502.9px;top:651.80px;font-size:12.9px;line-height:18px;color:#000;transform:translateX(-50%) scaleX(0.9900);-webkit-text-stroke:0.12px #000;">10.00</span>
<span class="t" style="left:611.9px;top:651.80px;font-size:12.9px;line-height:18px;color:#000;transform:translateX(-50%) scaleX(0.9900);-webkit-text-stroke:0.12px #000;">35</span>
<span class="t" style="left:709.4px;top:651.80px;font-size:12.9px;line-height:18px;color:#000;transform:translateX(-50%) scaleX(0.9900);-webkit-text-stroke:0.12px #000;">11.00</span>
<span class="t" style="left:835.4px;top:651.80px;font-size:12.9px;line-height:18px;color:#000;transform:translateX(-50%) scaleX(0.9900);-webkit-text-stroke:0.12px #000;">0.200</span>
<span class="t" style="left:970.4px;top:651.80px;font-size:12.9px;line-height:18px;color:#000;transform:translateX(-50%) scaleX(0.9900);-webkit-text-stroke:0.12px #000;">2.00</span>
<span class="t" style="left:1096.4px;top:651.80px;font-size:12.9px;line-height:18px;color:#000;transform:translateX(-50%) scaleX(0.9900);-webkit-text-stroke:0.12px #000;">261.97</span>
<span class="t" style="left:1210.4px;top:651.80px;font-size:12.9px;line-height:18px;color:#000;transform:translateX(-50%) scaleX(0.9900);-webkit-text-stroke:0.12px #000;">12.80</span>
<span class="t" style="left:184.9px;top:671.80px;font-size:12.9px;line-height:18px;color:#000;transform:translateX(-50%) scaleX(0.9900);-webkit-text-stroke:0.12px #000;">8</span>
<span class="t" style="left:266.4px;top:671.80px;font-size:12.9px;line-height:18px;color:#000;transform:translateX(-50%) scaleX(0.9900);-webkit-text-stroke:0.12px #000;">5</span>
<span class="t" style="left:375.4px;top:671.80px;font-size:12.9px;line-height:18px;color:#000;transform:translateX(-50%) scaleX(0.9900);-webkit-text-stroke:0.12px #000;">0.80</span>
<span class="t" style="left:502.9px;top:671.80px;font-size:12.9px;line-height:18px;color:#000;transform:translateX(-50%) scaleX(0.9900);-webkit-text-stroke:0.12px #000;">8.00</span>
<span class="t" style="left:611.9px;top:671.80px;font-size:12.9px;line-height:18px;color:#000;transform:translateX(-50%) scaleX(0.9900);-webkit-text-stroke:0.12px #000;">40</span>
<span class="t" style="left:709.4px;top:671.80px;font-size:12.9px;line-height:18px;color:#000;transform:translateX(-50%) scaleX(0.9900);-webkit-text-stroke:0.12px #000;">11.80</span>
<span class="t" style="left:835.4px;top:671.80px;font-size:12.9px;line-height:18px;color:#000;transform:translateX(-50%) scaleX(0.9900);-webkit-text-stroke:0.12px #000;">0.160</span>
<span class="t" style="left:970.4px;top:671.80px;font-size:12.9px;line-height:18px;color:#000;transform:translateX(-50%) scaleX(0.9900);-webkit-text-stroke:0.12px #000;">1.60</span>
<span class="t" style="left:1096.4px;top:671.80px;font-size:12.9px;line-height:18px;color:#000;transform:translateX(-50%) scaleX(0.9900);-webkit-text-stroke:0.12px #000;">351.15</span>
<span class="t" style="left:1210.4px;top:671.80px;font-size:12.9px;line-height:18px;color:#000;transform:translateX(-50%) scaleX(0.9900);-webkit-text-stroke:0.12px #000;">11.29</span>
<span class="t" style="left:184.9px;top:691.80px;font-size:12.9px;line-height:18px;color:#000;transform:translateX(-50%) scaleX(0.9900);-webkit-text-stroke:0.12px #000;">9</span>
<span class="t" style="left:266.4px;top:691.80px;font-size:12.9px;line-height:18px;color:#000;transform:translateX(-50%) scaleX(0.9900);-webkit-text-stroke:0.12px #000;">5</span>
<span class="t" style="left:375.4px;top:691.80px;font-size:12.9px;line-height:18px;color:#000;transform:translateX(-50%) scaleX(0.9900);-webkit-text-stroke:0.12px #000;">0.40</span>
<span class="t" style="left:502.9px;top:691.80px;font-size:12.9px;line-height:18px;color:#000;transform:translateX(-50%) scaleX(0.9900);-webkit-text-stroke:0.12px #000;">4.00</span>
<span class="t" style="left:611.9px;top:691.80px;font-size:12.9px;line-height:18px;color:#000;transform:translateX(-50%) scaleX(0.9900);-webkit-text-stroke:0.12px #000;">45</span>
<span class="t" style="left:709.4px;top:691.80px;font-size:12.9px;line-height:18px;color:#000;transform:translateX(-50%) scaleX(0.9900);-webkit-text-stroke:0.12px #000;">12.20</span>
<span class="t" style="left:835.4px;top:691.80px;font-size:12.9px;line-height:18px;color:#000;transform:translateX(-50%) scaleX(0.9900);-webkit-text-stroke:0.12px #000;">0.080</span>
<span class="t" style="left:970.4px;top:691.80px;font-size:12.9px;line-height:18px;color:#000;transform:translateX(-50%) scaleX(0.9900);-webkit-text-stroke:0.12px #000;">0.80</span>
<span class="t" style="left:1096.4px;top:691.80px;font-size:12.9px;line-height:18px;color:#000;transform:translateX(-50%) scaleX(0.9900);-webkit-text-stroke:0.12px #000;">872.45</span>
<span class="t" style="left:1210.4px;top:691.80px;font-size:12.9px;line-height:18px;color:#000;transform:translateX(-50%) scaleX(0.9900);-webkit-text-stroke:0.12px #000;">7.64</span>
<span class="t" style="left:184.9px;top:711.80px;font-size:12.9px;line-height:18px;color:#000;transform:translateX(-50%) scaleX(0.9900);-webkit-text-stroke:0.12px #000;">10</span>
<span class="t" style="left:266.4px;top:711.80px;font-size:12.9px;line-height:18px;color:#000;transform:translateX(-50%) scaleX(0.9900);-webkit-text-stroke:0.12px #000;">5</span>
<span class="t" style="left:375.4px;top:711.80px;font-size:12.9px;line-height:18px;color:#000;transform:translateX(-50%) scaleX(0.9900);-webkit-text-stroke:0.12px #000;">0.30</span>
<span class="t" style="left:502.9px;top:711.80px;font-size:12.9px;line-height:18px;color:#000;transform:translateX(-50%) scaleX(0.9900);-webkit-text-stroke:0.12px #000;">3.00</span>
<span class="t" style="left:611.9px;top:711.80px;font-size:12.9px;line-height:18px;color:#000;transform:translateX(-50%) scaleX(0.9900);-webkit-text-stroke:0.12px #000;">50</span>
<span class="t" style="left:709.4px;top:711.80px;font-size:12.9px;line-height:18px;color:#000;transform:translateX(-50%) scaleX(0.9900);-webkit-text-stroke:0.12px #000;">12.50</span>
<span class="t" style="left:835.4px;top:711.80px;font-size:12.9px;line-height:18px;color:#000;transform:translateX(-50%) scaleX(0.9900);-webkit-text-stroke:0.12px #000;">0.060</span>
<span class="t" style="left:970.4px;top:711.80px;font-size:12.9px;line-height:18px;color:#000;transform:translateX(-50%) scaleX(0.9900);-webkit-text-stroke:0.12px #000;">0.60</span>
<span class="t" style="left:1096.4px;top:711.80px;font-size:12.9px;line-height:18px;color:#000;transform:translateX(-50%) scaleX(0.9900);-webkit-text-stroke:0.12px #000;">1272.88</span>
<span class="t" style="left:1210.4px;top:711.80px;font-size:12.9px;line-height:18px;color:#000;transform:translateX(-50%) scaleX(0.9900);-webkit-text-stroke:0.12px #000;">6.50</span>
<span class="t" style="left:1315.9px;top:611.30px;font-size:12.9px;line-height:18px;color:#000;transform:translateX(-50%) scaleX(1.0000);-webkit-text-stroke:0.12px #000;">63.01</span>
<span class="t" style="left:318.4px;top:731.80px;font-size:13.2px;line-height:18px;color:#000;transform-origin:0 50%;transform:scaleX(0.9101);-webkit-text-stroke:0.12px #000;">TOTAL PENETRASI</span>
<span class="t" style="left:502.9px;top:731.80px;font-size:12.9px;line-height:18px;color:#000;transform:translateX(-50%) scaleX(1.0000);-webkit-text-stroke:0.12px #000;">125.00</span>
<span class="t" style="left:1096.4px;top:731.80px;font-size:13.2px;line-height:18px;color:#000;transform:translateX(-50%) scaleX(0.9058);-webkit-text-stroke:0.12px #000;">TOTAL CBR</span>
<span class="t" style="left:1210.4px;top:731.80px;font-size:12.9px;line-height:18px;color:#000;transform:translateX(-50%) scaleX(1.0000);-webkit-text-stroke:0.12px #000;">137.60</span>
<span class="t" style="left:1700.5px;top:271.80px;font-size:13.2px;line-height:18px;color:#000;font-weight:bold;transform:translateX(-50%) scaleX(0.9518);">CARA PENGGUNAAN</span>
<span class="t" style="left:1700.5px;top:291.80px;font-size:13.2px;line-height:18px;color:#000;transform:translateX(-50%) scaleX(0.9744);-webkit-text-stroke:0.12px #000;">1. ISI BAGIAN TUMBUKAN ( WARNA KUNING )</span>
<span class="t" style="left:1700.5px;top:311.80px;font-size:13.2px;line-height:18px;color:#000;transform:translateX(-50%) scaleX(0.9518);-webkit-text-stroke:0.12px #000;">2. ISI BAGIAN PENETRASI CM ( WARNA KUNING )</span>
<span class="t" style="left:1700.5px;top:331.80px;font-size:13.2px;line-height:18px;color:#000;transform:translateX(-50%) scaleX(0.9464);-webkit-text-stroke:0.12px #000;">3. HASIL CBR AKAN KELUAR OTOMATIS ( WARNA HIJAU )</span>
<span class="t" style="left:1700.5px;top:400.50px;font-size:13.2px;line-height:18px;color:#000;font-weight:bold;transform:translateX(-50%) scaleX(0.9856);">RUMUS YANG DIPAKAI UMUM DI INDONESIA</span>
<span class="t" style="left:1479.2px;top:431.80px;font-size:13.2px;line-height:18px;color:#000;transform-origin:0 50%;transform:scaleX(0.9271);-webkit-text-stroke:0.12px #000;">RUMUS KONUS 30</span>
<span class="t" style="left:1594.4px;top:431.80px;font-size:13.2px;line-height:18px;color:#000;transform-origin:0 50%;transform:scaleX(0.9605);-webkit-text-stroke:0.12px #000;">= log(CBR)=</span>
<span class="t" style="left:1666.8px;top:431.80px;font-size:13.2px;line-height:18px;color:#000;transform-origin:0 50%;transform:scaleX(0.9896);-webkit-text-stroke:0.12px #000;">1,352-1,125</span>
<span class="t" style="left:1739.5px;top:431.80px;font-size:13.2px;line-height:18px;color:#000;transform-origin:0 50%;transform:scaleX(0.9570);-webkit-text-stroke:0.12px #000;">log DCP</span>
<span class="t" style="left:1789.6px;top:431.80px;font-size:13.2px;line-height:18px;color:#000;transform-origin:0 50%;transform:scaleX(1.0957);-webkit-text-stroke:0.12px #000;">(cm/tumbukan)</span>
<span class="t" style="left:1479.2px;top:451.80px;font-size:13.2px;line-height:18px;color:#000;transform-origin:0 50%;transform:scaleX(0.9369);-webkit-text-stroke:0.12px #000;">RUMUS KONUS 60 =</span>
<span class="t" style="left:1604px;top:451.80px;font-size:13.2px;line-height:18px;color:#000;transform-origin:0 50%;transform:scaleX(0.9431);-webkit-text-stroke:0.12px #000;">Log(CBR) =</span>
<span class="t" style="left:1671.8px;top:451.80px;font-size:13.2px;line-height:18px;color:#000;transform-origin:0 50%;transform:scaleX(0.9864);-webkit-text-stroke:0.12px #000;">2,8135-1,313</span>
<span class="t" style="left:1751.2px;top:451.80px;font-size:13.2px;line-height:18px;color:#000;transform-origin:0 50%;transform:scaleX(1.0799);-webkit-text-stroke:0.12px #000;">log</span>
<span class="t" style="left:1777px;top:451.80px;font-size:13.2px;line-height:18px;color:#000;transform-origin:0 50%;transform:scaleX(0.8758);-webkit-text-stroke:0.12px #000;">DCP</span>
<span class="t" style="left:1804.2px;top:451.80px;font-size:13.2px;line-height:18px;color:#000;transform-origin:0 50%;transform:scaleX(1.1010);-webkit-text-stroke:0.12px #000;">(mm/tumbukan)</span>
</body></html>
